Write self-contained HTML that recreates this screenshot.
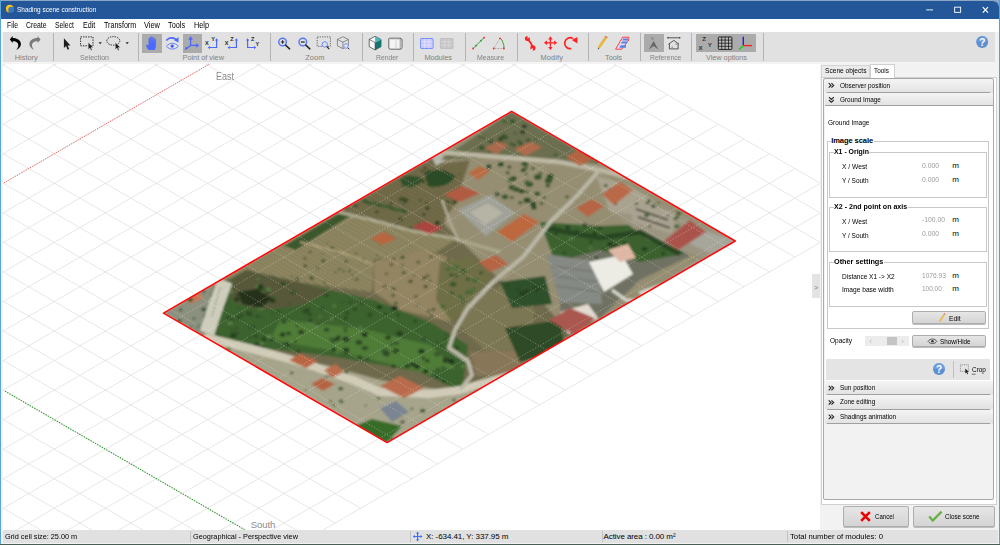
<!DOCTYPE html><html><head><meta charset="utf-8"><style>
*{margin:0;padding:0;box-sizing:border-box}
html,body{width:1000px;height:545px;overflow:hidden;background:#6aa8d8}
body{position:relative;font-family:"Liberation Sans",sans-serif}
.t{position:absolute;white-space:pre;line-height:normal}
.b{position:absolute}
svg{position:absolute;left:0;top:0;overflow:visible}
</style></head><body><div class="b" style="left:0px;top:0px;width:1000px;height:2px;background:#8aa6c4;"></div><div class="b" style="left:0px;top:0px;width:1.2px;height:545px;background:#5aa6d8;"></div><div class="b" style="left:0px;top:543.5px;width:1000px;height:2px;background:#4a5e56;"></div><div class="b" style="left:999px;top:0px;width:1px;height:543px;background:#5a9fd0;"></div><div class="b" style="left:1px;top:1px;width:998px;height:543px;background:#f2f2f2;border-top-right-radius:6px;"></div><div class="b" style="left:1px;top:1px;width:998px;height:18px;background:#24569a;border-top-right-radius:6px;"></div><div class="t" style="left:16.8px;top:5.21px;font-size:8.0px;color:#ffffff;letter-spacing:0.000px;transform:scaleX(0.806);transform-origin:0 0;">Shading scene construction</div><svg width="1000" height="20" style="left:0;top:0"><circle cx="9.7" cy="8.5" r="3.7" fill="#ffc814"/><path d="M6.4,10 A3.7,3.7 0 0 0 8.6,12" stroke="#f39a12" stroke-width="1.6" fill="none"/><circle cx="11.2" cy="9.7" r="2.9" fill="#3478c8"/><path d="M926.2 9.9H933" stroke="#e8eef8" stroke-width="1"/><rect x="954.6" y="7.2" width="6" height="5.2" fill="none" stroke="#e8eef8" stroke-width="1"/><path d="M982.8 7.2L988 12.6M988 7.2L982.8 12.6" stroke="#ffffff" stroke-width="1.2"/></svg><div class="b" style="left:1px;top:19px;width:998px;height:13px;background:#ffffff;"></div><div class="t" style="left:6.6px;top:20.78px;font-size:8.2px;color:#000;letter-spacing:0.000px;transform:scaleX(0.833);transform-origin:0 0;">File</div><div class="t" style="left:26.0px;top:20.78px;font-size:8.2px;color:#000;letter-spacing:0.000px;transform:scaleX(0.837);transform-origin:0 0;">Create</div><div class="t" style="left:55.0px;top:20.78px;font-size:8.2px;color:#000;letter-spacing:0.000px;transform:scaleX(0.834);transform-origin:0 0;">Select</div><div class="t" style="left:82.7px;top:20.78px;font-size:8.2px;color:#000;letter-spacing:0.000px;transform:scaleX(0.870);transform-origin:0 0;">Edit</div><div class="t" style="left:103.8px;top:20.78px;font-size:8.2px;color:#000;letter-spacing:0.000px;transform:scaleX(0.869);transform-origin:0 0;">Transform</div><div class="t" style="left:144.0px;top:20.78px;font-size:8.2px;color:#000;letter-spacing:0.000px;transform:scaleX(0.908);transform-origin:0 0;">View</div><div class="t" style="left:168.3px;top:20.78px;font-size:8.2px;color:#000;letter-spacing:0.000px;transform:scaleX(0.899);transform-origin:0 0;">Tools</div><div class="t" style="left:193.6px;top:20.78px;font-size:8.2px;color:#000;letter-spacing:0.000px;transform:scaleX(0.889);transform-origin:0 0;">Help</div><div class="b" style="left:3px;top:32px;width:992px;height:30px;background:#e1e1e1;"></div><div class="b" style="left:1px;top:62px;width:998px;height:2px;background:#f4f4f4;"></div><div class="b" style="left:53.1px;top:33px;width:1px;height:28px;background:#b4b4b4;"></div><div class="b" style="left:138.3px;top:33px;width:1px;height:28px;background:#b4b4b4;"></div><div class="b" style="left:270.2px;top:33px;width:1px;height:28px;background:#b4b4b4;"></div><div class="b" style="left:361.8px;top:33px;width:1px;height:28px;background:#b4b4b4;"></div><div class="b" style="left:412.9px;top:33px;width:1px;height:28px;background:#b4b4b4;"></div><div class="b" style="left:464.9px;top:33px;width:1px;height:28px;background:#b4b4b4;"></div><div class="b" style="left:517.0px;top:33px;width:1px;height:28px;background:#b4b4b4;"></div><div class="b" style="left:587.9px;top:33px;width:1px;height:28px;background:#b4b4b4;"></div><div class="b" style="left:639.9px;top:33px;width:1px;height:28px;background:#b4b4b4;"></div><div class="b" style="left:691.1px;top:33px;width:1px;height:28px;background:#b4b4b4;"></div><div class="b" style="left:762.5px;top:33px;width:1px;height:28px;background:#b4b4b4;"></div><div class="t" style="left:14.7px;top:53.09px;font-size:7.41px;color:#828282;letter-spacing:0.006px;">History</div><div class="t" style="left:80.0px;top:53.09px;font-size:7.41px;color:#828282;letter-spacing:0.000px;transform:scaleX(0.951);transform-origin:0 0;">Selection</div><div class="t" style="left:182.5px;top:53.09px;font-size:7.41px;color:#828282;letter-spacing:-0.039px;">Point of view</div><div class="t" style="left:305.2px;top:53.09px;font-size:7.41px;color:#828282;letter-spacing:0.065px;">Zoom</div><div class="t" style="left:375.6px;top:53.09px;font-size:7.41px;color:#828282;letter-spacing:0.000px;transform:scaleX(0.922);transform-origin:0 0;">Render</div><div class="t" style="left:424.4px;top:53.09px;font-size:7.41px;color:#828282;letter-spacing:-0.087px;">Modules</div><div class="t" style="left:476.6px;top:53.09px;font-size:7.41px;color:#828282;letter-spacing:0.000px;transform:scaleX(0.937);transform-origin:0 0;">Measure</div><div class="t" style="left:540.5px;top:53.09px;font-size:7.41px;color:#828282;letter-spacing:0.113px;">Modify</div><div class="t" style="left:605.0px;top:53.09px;font-size:7.41px;color:#828282;letter-spacing:-0.060px;">Tools</div><div class="t" style="left:649.6px;top:53.09px;font-size:7.41px;color:#828282;letter-spacing:0.000px;transform:scaleX(0.918);transform-origin:0 0;">Reference</div><div class="t" style="left:706.0px;top:53.09px;font-size:7.41px;color:#828282;letter-spacing:-0.073px;">View options</div><div class="b" style="left:142.3px;top:33.5px;width:19.6px;height:19px;background:#ababab;"></div><div class="b" style="left:182.5px;top:33.5px;width:19.3px;height:19px;background:#ababab;"></div><div class="b" style="left:644px;top:33.6px;width:20px;height:18.8px;background:#ababab;"></div><div class="b" style="left:696px;top:33.6px;width:60px;height:18.8px;background:#ababab;"></div><div class="b" style="left:3px;top:64px;width:817px;height:466px;background:#ffffff;"></div><svg width="1000" height="545" style="left:0;top:0">
<defs><clipPath id="vp"><rect x="3" y="64" width="817" height="466"/></clipPath>
<clipPath id="mp"><polygon points="163.5,313.1 511.6,111.4 735.2,241.0 387.1,442.6"/></clipPath></defs>
<g clip-path="url(#vp)">
<path d="M0.00 -169.30L105.38 -230.24M0.00 -139.76L130.92 -215.47M0.00 -110.22L156.46 -200.70M0.00 -80.68L182.00 -185.93M0.00 -51.14L207.54 -171.16M0.00 -21.60L233.08 -156.39M0.00 7.94L258.62 -141.62M0.00 37.48L284.16 -126.85M0.00 67.02L309.70 -112.08M0.00 96.56L335.24 -97.31M0.00 126.10L360.78 -82.54M0.00 155.64L386.32 -67.77M0.00 185.18L411.86 -53.00M0.00 214.72L437.40 -38.23M0.00 244.26L462.94 -23.46M0.00 273.80L488.48 -8.69M0.00 303.34L514.02 6.08M0.00 332.88L539.56 20.85M0.00 362.42L565.10 35.62M0.00 391.96L590.64 50.39M0.00 421.50L616.18 65.16M0.00 451.04L641.72 79.93M0.00 480.58L667.26 94.70M0.00 510.12L692.80 109.47M0.00 539.66L718.34 124.24M0.00 569.20L743.88 139.01M0.00 598.74L769.42 153.78M0.00 628.28L794.96 168.55M0.00 657.82L820.00 183.61M0.00 687.36L820.00 213.15M0.00 716.90L820.00 242.69M0.00 -291.18L820.00 183.03M0.00 -261.64L820.00 212.57M0.00 -232.10L820.00 242.11M0.00 -202.56L794.96 257.17M0.00 -173.02L769.42 271.94M0.00 -143.48L743.88 286.71M0.00 -113.94L718.34 301.48M0.00 -84.40L692.80 316.25M0.00 -54.86L667.26 331.02M0.00 -25.32L641.72 345.79M0.00 4.22L616.18 360.56M0.00 33.76L590.64 375.33M0.00 63.30L565.10 390.10M0.00 92.84L539.56 404.87M0.00 122.38L514.02 419.64M0.00 151.92L488.48 434.41M0.00 181.46L462.94 449.18M0.00 211.00L437.40 463.95M0.00 240.54L411.86 478.72M0.00 270.08L386.32 493.49M0.00 299.62L360.78 508.26M0.00 329.16L335.24 523.03M0.00 358.70L309.70 537.80M0.00 388.24L284.16 552.57M0.00 417.78L258.62 567.34M0.00 447.32L233.08 582.11M0.00 476.86L207.54 596.88M0.00 506.40L182.00 611.65M0.00 535.94L156.46 626.42M0.00 565.48L130.92 641.19M0.00 595.02L105.38 655.96M0.00 624.56L79.84 670.73M0.00 654.10L54.30 685.50M0.00 683.64L28.76 700.27M0.00 713.18L3.22 715.04" stroke="#dcdcdc" stroke-width="0.7" fill="none"/>
<line x1="4" y1="182.87" x2="210.8" y2="63.27" stroke="#f06060" stroke-width="1" stroke-dasharray="1.2 1.3"/>
<line x1="5" y1="391.13" x2="244.5" y2="529.63" stroke="#2a9a2a" stroke-width="1.1" stroke-dasharray="1.3 1.3"/>
<g clip-path="url(#mp)"><defs><filter id="mblur" filterUnits="userSpaceOnUse" x="150" y="100" width="600" height="350"><feGaussianBlur stdDeviation="1"/><feColorMatrix type="saturate" values="1.12"/></filter></defs><g filter="url(#mblur)"><polygon points="163.5,313.1 511.6,111.4 735.2,241.0 387.1,442.6" fill="#6e6a50" /><polygon points="440.0,152.0 511.6,111.4 735.2,241.0 660.0,285.0 600.0,320.0 560.0,322.0 540.0,300.0 500.0,280.0 470.0,250.0 445.0,225.0" fill="#948e76" /><pattern id="vc1" width="3.6" height="3.6" patternUnits="userSpaceOnUse" patternTransform="rotate(30)"><rect width="3.6" height="3.6" fill="#9a9270"/><rect width="3.6" height="1.3" fill="#6a664a"/></pattern><polygon points="190.0,298.0 340.0,211.0 420.0,232.0 455.0,240.0 430.0,256.0 374.0,259.0 372.0,292.0 300.0,282.0 246.0,270.0" fill="url(#vc1)" /><pattern id="vc2" width="3.6" height="3.6" patternUnits="userSpaceOnUse" patternTransform="rotate(30)"><rect width="3.6" height="3.6" fill="#7c7656"/><rect width="3.6" height="1.3" fill="#545036"/></pattern><polygon points="345.0,208.0 420.0,166.0 470.0,160.0 455.0,205.0 440.0,225.0 410.0,230.0 380.0,222.0" fill="url(#vc2)" /><ellipse cx="401.5" cy="199.2" rx="2.9" ry="2.1" fill="#404e30" opacity="1.0"/><ellipse cx="401.5" cy="219.9" rx="1.5" ry="1.1" fill="#2c3a24" opacity="1.0"/><ellipse cx="404.5" cy="203.0" rx="1.5" ry="1.1" fill="#404e30" opacity="1.0"/><ellipse cx="446.2" cy="208.5" rx="1.2" ry="0.9" fill="#404e30" opacity="1.0"/><ellipse cx="421.9" cy="171.0" rx="1.2" ry="0.9" fill="#2c3a24" opacity="1.0"/><ellipse cx="454.9" cy="202.0" rx="2.6" ry="1.9" fill="#404e30" opacity="1.0"/><ellipse cx="400.1" cy="219.0" rx="2.1" ry="1.6" fill="#2c3a24" opacity="1.0"/><ellipse cx="355.6" cy="205.8" rx="1.9" ry="1.4" fill="#2c3a24" opacity="1.0"/><ellipse cx="433.5" cy="182.1" rx="1.6" ry="1.2" fill="#404e30" opacity="1.0"/><ellipse cx="347.1" cy="207.9" rx="1.5" ry="1.1" fill="#34462a" opacity="1.0"/><ellipse cx="423.7" cy="214.5" rx="1.6" ry="1.2" fill="#34462a" opacity="1.0"/><ellipse cx="396.3" cy="224.6" rx="1.4" ry="1.0" fill="#2c3a24" opacity="1.0"/><ellipse cx="444.6" cy="172.4" rx="2.2" ry="1.6" fill="#404e30" opacity="1.0"/><ellipse cx="408.6" cy="229.0" rx="2.6" ry="1.9" fill="#404e30" opacity="1.0"/><ellipse cx="425.5" cy="168.2" rx="1.9" ry="1.4" fill="#34462a" opacity="1.0"/><ellipse cx="420.3" cy="200.4" rx="1.2" ry="0.9" fill="#34462a" opacity="1.0"/><ellipse cx="441.6" cy="183.0" rx="1.7" ry="1.3" fill="#34462a" opacity="1.0"/><ellipse cx="391.1" cy="203.6" rx="1.4" ry="1.0" fill="#2c3a24" opacity="1.0"/><ellipse cx="405.5" cy="200.2" rx="2.7" ry="2.0" fill="#34462a" opacity="1.0"/><ellipse cx="423.4" cy="181.8" rx="1.6" ry="1.2" fill="#2c3a24" opacity="1.0"/><ellipse cx="455.3" cy="202.2" rx="1.9" ry="1.4" fill="#34462a" opacity="1.0"/><ellipse cx="376.9" cy="211.8" rx="1.9" ry="1.4" fill="#404e30" opacity="1.0"/><ellipse cx="448.0" cy="201.8" rx="1.7" ry="1.2" fill="#34462a" opacity="1.0"/><ellipse cx="426.7" cy="203.1" rx="1.3" ry="1.0" fill="#34462a" opacity="1.0"/><ellipse cx="459.7" cy="174.3" rx="1.2" ry="0.9" fill="#404e30" opacity="1.0"/><ellipse cx="411.4" cy="228.1" rx="1.3" ry="1.0" fill="#34462a" opacity="1.0"/><ellipse cx="427.1" cy="208.4" rx="2.2" ry="1.6" fill="#34462a" opacity="1.0"/><ellipse cx="418.7" cy="224.7" rx="2.0" ry="1.5" fill="#404e30" opacity="1.0"/><ellipse cx="405.3" cy="211.1" rx="1.7" ry="1.3" fill="#34462a" opacity="1.0"/><ellipse cx="437.1" cy="223.0" rx="2.5" ry="1.9" fill="#2c3a24" opacity="1.0"/><path d="M424,172 Q440,166 456,176 Q446,190 428,186 Z" fill="#2e4a2a"/><path d="M400,178 Q412,172 424,180 Q414,190 402,186 Z" fill="#35502e"/><path d="M362,201 L384,206 L406,212" stroke="#3a5a34" stroke-width="3" fill="none"/><polygon points="431.0,155.0 440.0,152.0 446.0,160.0 436.0,166.0" fill="#b8bab0" /><polygon points="284.0,246.0 340.0,213.0 350.0,216.0 296.0,250.0" fill="#3c5632" /><ellipse cx="500.7" cy="164.2" rx="3.1" ry="2.3" fill="#2e4a2a" opacity="1.0"/><ellipse cx="548.4" cy="180.9" rx="3.7" ry="2.7" fill="#3a5430" opacity="1.0"/><ellipse cx="521.6" cy="191.2" rx="3.0" ry="2.2" fill="#2e4a2a" opacity="1.0"/><ellipse cx="524.8" cy="164.0" rx="3.4" ry="2.5" fill="#3a5430" opacity="1.0"/><ellipse cx="505.0" cy="196.8" rx="3.3" ry="2.4" fill="#3a5430" opacity="1.0"/><ellipse cx="511.6" cy="187.1" rx="3.2" ry="2.4" fill="#2e4a2a" opacity="1.0"/><ellipse cx="529.4" cy="184.3" rx="3.8" ry="2.8" fill="#3a5430" opacity="1.0"/><ellipse cx="497.1" cy="193.9" rx="2.6" ry="2.0" fill="#2e4a2a" opacity="1.0"/><ellipse cx="537.8" cy="177.1" rx="3.9" ry="2.9" fill="#3a5430" opacity="1.0"/><ellipse cx="550.3" cy="176.3" rx="3.4" ry="2.5" fill="#2e4a2a" opacity="1.0"/><ellipse cx="527.1" cy="200.2" rx="3.6" ry="2.7" fill="#2e4a2a" opacity="1.0"/><ellipse cx="549.2" cy="179.2" rx="3.3" ry="2.4" fill="#3a5430" opacity="1.0"/><ellipse cx="488.9" cy="166.7" rx="2.9" ry="2.1" fill="#2e4a2a" opacity="1.0"/><ellipse cx="534.0" cy="207.5" rx="2.8" ry="2.1" fill="#2e4a2a" opacity="1.0"/><polygon points="440.0,160.0 511.6,111.4 600.0,163.0 560.0,162.0 500.0,156.0" fill="#6c6e52" /><ellipse cx="501.2" cy="138.2" rx="2.4" ry="1.8" fill="#2a3a24" opacity="1.0"/><ellipse cx="574.3" cy="162.1" rx="2.0" ry="1.5" fill="#34502e" opacity="1.0"/><ellipse cx="537.2" cy="146.4" rx="1.7" ry="1.2" fill="#44603a" opacity="1.0"/><ellipse cx="489.4" cy="152.2" rx="1.2" ry="0.9" fill="#34502e" opacity="1.0"/><ellipse cx="504.8" cy="121.2" rx="2.6" ry="1.9" fill="#44603a" opacity="1.0"/><ellipse cx="511.4" cy="143.9" rx="2.4" ry="1.7" fill="#44603a" opacity="1.0"/><ellipse cx="515.6" cy="148.3" rx="1.5" ry="1.1" fill="#44603a" opacity="1.0"/><ellipse cx="512.1" cy="121.6" rx="2.8" ry="2.1" fill="#34502e" opacity="1.0"/><ellipse cx="500.3" cy="140.8" rx="2.8" ry="2.0" fill="#44603a" opacity="1.0"/><ellipse cx="514.2" cy="145.0" rx="1.5" ry="1.1" fill="#2a3a24" opacity="1.0"/><ellipse cx="578.6" cy="152.6" rx="2.9" ry="2.1" fill="#34502e" opacity="1.0"/><ellipse cx="596.9" cy="161.8" rx="2.1" ry="1.6" fill="#44603a" opacity="1.0"/><ellipse cx="481.9" cy="148.5" rx="1.2" ry="0.9" fill="#2a3a24" opacity="1.0"/><ellipse cx="528.0" cy="151.0" rx="2.0" ry="1.5" fill="#34502e" opacity="1.0"/><ellipse cx="474.9" cy="156.2" rx="1.9" ry="1.4" fill="#34502e" opacity="1.0"/><ellipse cx="555.8" cy="154.7" rx="2.4" ry="1.8" fill="#44603a" opacity="1.0"/><ellipse cx="532.6" cy="147.0" rx="2.5" ry="1.9" fill="#44603a" opacity="1.0"/><ellipse cx="524.3" cy="126.4" rx="2.5" ry="1.8" fill="#2a3a24" opacity="1.0"/><ellipse cx="547.4" cy="160.7" rx="2.8" ry="2.0" fill="#2a3a24" opacity="1.0"/><ellipse cx="473.3" cy="155.3" rx="2.9" ry="2.2" fill="#2a3a24" opacity="1.0"/><ellipse cx="483.7" cy="137.1" rx="1.9" ry="1.4" fill="#34502e" opacity="1.0"/><ellipse cx="520.5" cy="142.6" rx="1.2" ry="0.9" fill="#34502e" opacity="1.0"/><ellipse cx="522.6" cy="132.1" rx="2.6" ry="1.9" fill="#2a3a24" opacity="1.0"/><ellipse cx="479.4" cy="136.8" rx="1.8" ry="1.3" fill="#44603a" opacity="1.0"/><ellipse cx="481.6" cy="147.6" rx="2.9" ry="2.2" fill="#34502e" opacity="1.0"/><ellipse cx="496.9" cy="143.4" rx="1.3" ry="1.0" fill="#2a3a24" opacity="1.0"/><path d="M300,242 L340,252 L378,266" stroke="#a89c7c" stroke-width="2.2" fill="none"/><polygon points="374.0,262.0 425.0,250.0 462.0,262.0 468.0,300.0 452.0,322.0 400.0,310.0 374.0,292.0" fill="#928466" /><ellipse cx="428.7" cy="311.3" rx="1.8" ry="1.3" fill="#3e4a30" opacity="1.0"/><ellipse cx="392.6" cy="288.2" rx="1.5" ry="1.1" fill="#56603e" opacity="1.0"/><ellipse cx="433.5" cy="309.4" rx="1.7" ry="1.3" fill="#3e4a30" opacity="1.0"/><ellipse cx="393.2" cy="295.5" rx="1.8" ry="1.3" fill="#3e4a30" opacity="1.0"/><ellipse cx="394.3" cy="289.1" rx="1.7" ry="1.3" fill="#4a5636" opacity="1.0"/><ellipse cx="395.9" cy="303.3" rx="2.0" ry="1.5" fill="#4a5636" opacity="1.0"/><ellipse cx="403.7" cy="272.7" rx="2.1" ry="1.5" fill="#4a5636" opacity="1.0"/><ellipse cx="447.2" cy="264.0" rx="1.1" ry="0.8" fill="#4a5636" opacity="1.0"/><ellipse cx="410.5" cy="281.3" rx="2.1" ry="1.6" fill="#3e4a30" opacity="1.0"/><ellipse cx="448.3" cy="259.1" rx="1.5" ry="1.1" fill="#3e4a30" opacity="1.0"/><ellipse cx="427.6" cy="275.7" rx="2.0" ry="1.5" fill="#56603e" opacity="1.0"/><ellipse cx="384.8" cy="286.4" rx="1.9" ry="1.4" fill="#3e4a30" opacity="1.0"/><ellipse cx="449.5" cy="284.7" rx="1.1" ry="0.8" fill="#3e4a30" opacity="1.0"/><ellipse cx="431.7" cy="315.2" rx="1.6" ry="1.2" fill="#4a5636" opacity="1.0"/><ellipse cx="391.3" cy="264.7" rx="2.0" ry="1.5" fill="#56603e" opacity="1.0"/><ellipse cx="417.4" cy="305.1" rx="1.4" ry="1.0" fill="#56603e" opacity="1.0"/><ellipse cx="414.1" cy="275.5" rx="1.3" ry="0.9" fill="#56603e" opacity="1.0"/><ellipse cx="453.4" cy="263.1" rx="1.6" ry="1.2" fill="#3e4a30" opacity="1.0"/><ellipse cx="430.9" cy="256.8" rx="1.9" ry="1.4" fill="#56603e" opacity="1.0"/><ellipse cx="458.0" cy="307.7" rx="1.8" ry="1.4" fill="#3e4a30" opacity="1.0"/><ellipse cx="462.3" cy="291.0" rx="1.3" ry="0.9" fill="#3e4a30" opacity="1.0"/><ellipse cx="444.0" cy="306.0" rx="2.0" ry="1.5" fill="#56603e" opacity="1.0"/><ellipse cx="386.5" cy="273.8" rx="1.7" ry="1.2" fill="#56603e" opacity="1.0"/><ellipse cx="446.1" cy="305.1" rx="1.5" ry="1.1" fill="#3e4a30" opacity="1.0"/><ellipse cx="402.4" cy="257.3" rx="2.1" ry="1.5" fill="#3e4a30" opacity="1.0"/><ellipse cx="402.1" cy="265.6" rx="1.5" ry="1.1" fill="#4a5636" opacity="1.0"/><ellipse cx="424.1" cy="278.1" rx="2.2" ry="1.6" fill="#3e4a30" opacity="1.0"/><ellipse cx="394.0" cy="258.6" rx="1.5" ry="1.1" fill="#3e4a30" opacity="1.0"/><ellipse cx="443.4" cy="268.5" rx="1.5" ry="1.1" fill="#4a5636" opacity="1.0"/><ellipse cx="445.6" cy="296.7" rx="1.0" ry="0.8" fill="#56603e" opacity="1.0"/><ellipse cx="425.7" cy="286.6" rx="2.1" ry="1.6" fill="#3e4a30" opacity="1.0"/><ellipse cx="415.8" cy="296.4" rx="1.7" ry="1.2" fill="#3e4a30" opacity="1.0"/><ellipse cx="418.3" cy="262.2" rx="1.6" ry="1.2" fill="#3e4a30" opacity="1.0"/><ellipse cx="430.1" cy="280.9" rx="1.6" ry="1.2" fill="#56603e" opacity="1.0"/><ellipse cx="339.5" cy="268.9" rx="1.3" ry="1.0" fill="#4a5636" opacity="1.0"/><ellipse cx="332.2" cy="247.5" rx="2.0" ry="1.5" fill="#4a5636" opacity="1.0"/><ellipse cx="349.6" cy="271.1" rx="1.4" ry="1.0" fill="#4a5636" opacity="1.0"/><ellipse cx="317.6" cy="267.8" rx="1.8" ry="1.3" fill="#4a5636" opacity="1.0"/><ellipse cx="323.0" cy="261.0" rx="2.0" ry="1.5" fill="#3e4c30" opacity="1.0"/><ellipse cx="291.7" cy="275.9" rx="1.0" ry="0.7" fill="#4a5636" opacity="1.0"/><ellipse cx="327.5" cy="243.2" rx="1.0" ry="0.7" fill="#3e4c30" opacity="1.0"/><ellipse cx="363.5" cy="259.6" rx="1.2" ry="0.9" fill="#4a5636" opacity="1.0"/><ellipse cx="311.9" cy="278.4" rx="1.9" ry="1.4" fill="#3e4c30" opacity="1.0"/><ellipse cx="356.2" cy="253.3" rx="1.2" ry="0.9" fill="#3e4c30" opacity="1.0"/><ellipse cx="357.6" cy="279.0" rx="1.1" ry="0.8" fill="#3e4c30" opacity="1.0"/><ellipse cx="335.4" cy="272.4" rx="1.1" ry="0.8" fill="#3e4c30" opacity="1.0"/><ellipse cx="297.3" cy="279.1" rx="2.0" ry="1.5" fill="#3e4c30" opacity="1.0"/><ellipse cx="343.6" cy="271.0" rx="1.3" ry="1.0" fill="#4a5636" opacity="1.0"/><ellipse cx="310.2" cy="252.0" rx="1.5" ry="1.1" fill="#3e4c30" opacity="1.0"/><ellipse cx="356.0" cy="280.0" rx="1.2" ry="0.9" fill="#4a5636" opacity="1.0"/><ellipse cx="377.0" cy="255.4" rx="1.1" ry="0.8" fill="#3e4c30" opacity="1.0"/><ellipse cx="305.3" cy="265.7" rx="1.8" ry="1.3" fill="#3e4c30" opacity="1.0"/><ellipse cx="322.7" cy="254.0" rx="1.0" ry="0.8" fill="#4a5636" opacity="1.0"/><ellipse cx="345.9" cy="261.5" rx="1.7" ry="1.3" fill="#4a5636" opacity="1.0"/><ellipse cx="352.6" cy="275.2" rx="1.5" ry="1.1" fill="#4a5636" opacity="1.0"/><ellipse cx="310.8" cy="277.2" rx="1.3" ry="1.0" fill="#3e4c30" opacity="1.0"/><ellipse cx="304.8" cy="258.7" rx="1.6" ry="1.2" fill="#4a5636" opacity="1.0"/><ellipse cx="324.5" cy="282.2" rx="1.3" ry="0.9" fill="#4a5636" opacity="1.0"/><ellipse cx="374.1" cy="263.6" rx="1.0" ry="0.8" fill="#4a5636" opacity="1.0"/><polygon points="200.0,300.0 246.0,270.0 300.0,283.0 374.0,300.0 430.0,322.0 468.0,345.0 462.0,392.0 420.0,372.0 330.0,356.0 262.0,348.0 214.0,338.0" fill="#406234" /><polygon points="280.0,320.0 360.0,328.0 430.0,345.0 455.0,368.0 420.0,372.0 340.0,352.0 270.0,340.0" fill="#537a40" /><polygon points="228.0,284.0 246.0,270.0 300.0,283.0 330.0,292.0 300.0,306.0 260.0,310.0 232.0,302.0" fill="#56583e" /><ellipse cx="398.0" cy="314.9" rx="2.2" ry="1.6" fill="#324a2a" opacity="1.0"/><ellipse cx="424.1" cy="338.7" rx="1.7" ry="1.3" fill="#223620" opacity="1.0"/><ellipse cx="345.8" cy="339.2" rx="3.4" ry="2.5" fill="#223620" opacity="1.0"/><ellipse cx="217.2" cy="336.7" rx="3.0" ry="2.2" fill="#2a4024" opacity="1.0"/><ellipse cx="289.7" cy="303.4" rx="1.6" ry="1.2" fill="#3b5830" opacity="1.0"/><ellipse cx="305.7" cy="311.2" rx="3.4" ry="2.5" fill="#324a2a" opacity="1.0"/><ellipse cx="332.3" cy="335.6" rx="2.9" ry="2.1" fill="#5a7a48" opacity="1.0"/><ellipse cx="421.4" cy="351.3" rx="3.1" ry="2.3" fill="#223620" opacity="1.0"/><ellipse cx="456.7" cy="348.1" rx="2.5" ry="1.8" fill="#2a4024" opacity="1.0"/><ellipse cx="415.0" cy="321.4" rx="2.3" ry="1.7" fill="#324a2a" opacity="1.0"/><ellipse cx="265.9" cy="289.8" rx="2.7" ry="2.0" fill="#324a2a" opacity="1.0"/><ellipse cx="286.0" cy="317.5" rx="2.5" ry="1.8" fill="#3b5830" opacity="1.0"/><ellipse cx="282.7" cy="284.0" rx="2.7" ry="2.0" fill="#324a2a" opacity="1.0"/><ellipse cx="444.5" cy="361.9" rx="1.4" ry="1.0" fill="#223620" opacity="1.0"/><ellipse cx="229.1" cy="292.5" rx="1.8" ry="1.4" fill="#324a2a" opacity="1.0"/><ellipse cx="360.8" cy="327.6" rx="2.4" ry="1.8" fill="#223620" opacity="1.0"/><ellipse cx="249.6" cy="304.3" rx="1.7" ry="1.3" fill="#3b5830" opacity="1.0"/><ellipse cx="329.9" cy="319.1" rx="3.4" ry="2.5" fill="#5a7a48" opacity="1.0"/><ellipse cx="258.3" cy="286.4" rx="3.0" ry="2.2" fill="#5a7a48" opacity="1.0"/><ellipse cx="413.0" cy="364.4" rx="3.0" ry="2.2" fill="#2a4024" opacity="1.0"/><ellipse cx="391.2" cy="343.9" rx="1.7" ry="1.3" fill="#324a2a" opacity="1.0"/><ellipse cx="443.4" cy="368.8" rx="1.7" ry="1.2" fill="#5a7a48" opacity="1.0"/><ellipse cx="271.4" cy="335.2" rx="1.7" ry="1.3" fill="#324a2a" opacity="1.0"/><ellipse cx="426.8" cy="370.3" rx="1.6" ry="1.1" fill="#3b5830" opacity="1.0"/><ellipse cx="364.8" cy="334.4" rx="3.2" ry="2.4" fill="#223620" opacity="1.0"/><ellipse cx="345.6" cy="331.7" rx="1.4" ry="1.0" fill="#324a2a" opacity="1.0"/><ellipse cx="255.9" cy="336.3" rx="2.5" ry="1.8" fill="#324a2a" opacity="1.0"/><ellipse cx="453.7" cy="387.6" rx="2.0" ry="1.5" fill="#223620" opacity="1.0"/><ellipse cx="220.4" cy="307.3" rx="2.3" ry="1.7" fill="#2a4024" opacity="1.0"/><ellipse cx="228.3" cy="318.1" rx="2.3" ry="1.7" fill="#2a4024" opacity="1.0"/><ellipse cx="263.6" cy="338.8" rx="2.3" ry="1.7" fill="#2a4024" opacity="1.0"/><ellipse cx="429.4" cy="373.0" rx="2.9" ry="2.1" fill="#5a7a48" opacity="1.0"/><ellipse cx="451.2" cy="361.5" rx="3.4" ry="2.5" fill="#223620" opacity="1.0"/><ellipse cx="250.6" cy="315.9" rx="1.6" ry="1.2" fill="#3b5830" opacity="1.0"/><ellipse cx="453.3" cy="338.7" rx="2.9" ry="2.1" fill="#3b5830" opacity="1.0"/><ellipse cx="319.8" cy="316.7" rx="1.6" ry="1.2" fill="#5a7a48" opacity="1.0"/><ellipse cx="260.7" cy="289.2" rx="1.6" ry="1.2" fill="#223620" opacity="1.0"/><ellipse cx="237.3" cy="295.1" rx="1.7" ry="1.2" fill="#223620" opacity="1.0"/><ellipse cx="367.0" cy="358.7" rx="2.6" ry="2.0" fill="#3b5830" opacity="1.0"/><ellipse cx="463.2" cy="366.3" rx="2.7" ry="2.0" fill="#5a7a48" opacity="1.0"/><ellipse cx="342.0" cy="301.8" rx="1.8" ry="1.3" fill="#3b5830" opacity="1.0"/><ellipse cx="301.2" cy="332.1" rx="3.0" ry="2.2" fill="#2a4024" opacity="1.0"/><ellipse cx="346.9" cy="313.0" rx="2.4" ry="1.8" fill="#324a2a" opacity="1.0"/><ellipse cx="236.5" cy="328.3" rx="2.2" ry="1.7" fill="#3b5830" opacity="1.0"/><ellipse cx="296.8" cy="326.5" rx="1.6" ry="1.2" fill="#324a2a" opacity="1.0"/><ellipse cx="264.0" cy="339.5" rx="2.5" ry="1.9" fill="#2a4024" opacity="1.0"/><ellipse cx="350.2" cy="302.3" rx="3.3" ry="2.4" fill="#3b5830" opacity="1.0"/><ellipse cx="249.7" cy="336.8" rx="1.5" ry="1.1" fill="#2a4024" opacity="1.0"/><ellipse cx="364.9" cy="348.1" rx="3.0" ry="2.2" fill="#324a2a" opacity="1.0"/><ellipse cx="253.5" cy="327.1" rx="1.7" ry="1.2" fill="#223620" opacity="1.0"/><ellipse cx="231.7" cy="319.5" rx="2.1" ry="1.5" fill="#324a2a" opacity="1.0"/><ellipse cx="270.7" cy="339.3" rx="2.1" ry="1.5" fill="#2a4024" opacity="1.0"/><ellipse cx="393.4" cy="366.1" rx="2.2" ry="1.6" fill="#223620" opacity="1.0"/><ellipse cx="360.8" cy="327.3" rx="2.2" ry="1.6" fill="#5a7a48" opacity="1.0"/><ellipse cx="444.7" cy="338.9" rx="2.2" ry="1.6" fill="#3b5830" opacity="1.0"/><ellipse cx="309.6" cy="322.9" rx="2.6" ry="1.9" fill="#5a7a48" opacity="1.0"/><ellipse cx="288.5" cy="333.5" rx="2.3" ry="1.7" fill="#2a4024" opacity="1.0"/><ellipse cx="396.2" cy="342.9" rx="2.9" ry="2.2" fill="#3b5830" opacity="1.0"/><ellipse cx="436.5" cy="377.0" rx="1.9" ry="1.4" fill="#223620" opacity="1.0"/><ellipse cx="346.1" cy="350.1" rx="3.3" ry="2.5" fill="#2a4024" opacity="1.0"/><ellipse cx="346.4" cy="338.8" rx="1.7" ry="1.3" fill="#223620" opacity="1.0"/><ellipse cx="233.2" cy="335.6" rx="3.3" ry="2.5" fill="#2a4024" opacity="1.0"/><ellipse cx="318.1" cy="324.9" rx="2.5" ry="1.8" fill="#324a2a" opacity="1.0"/><ellipse cx="295.5" cy="341.4" rx="1.5" ry="1.1" fill="#2a4024" opacity="1.0"/><ellipse cx="321.9" cy="308.3" rx="2.1" ry="1.5" fill="#324a2a" opacity="1.0"/><ellipse cx="326.7" cy="295.2" rx="2.0" ry="1.5" fill="#2a4024" opacity="1.0"/><ellipse cx="294.9" cy="327.6" rx="1.7" ry="1.3" fill="#5a7a48" opacity="1.0"/><ellipse cx="394.5" cy="308.2" rx="3.2" ry="2.4" fill="#223620" opacity="1.0"/><ellipse cx="259.8" cy="307.5" rx="2.9" ry="2.1" fill="#324a2a" opacity="1.0"/><ellipse cx="334.4" cy="306.0" rx="1.9" ry="1.4" fill="#5a7a48" opacity="1.0"/><ellipse cx="437.0" cy="342.0" rx="1.9" ry="1.4" fill="#3b5830" opacity="1.0"/><ellipse cx="260.6" cy="286.2" rx="2.8" ry="2.0" fill="#223620" opacity="1.0"/><ellipse cx="341.6" cy="334.8" rx="1.5" ry="1.1" fill="#5a7a48" opacity="1.0"/><ellipse cx="357.2" cy="335.5" rx="2.3" ry="1.7" fill="#5a7a48" opacity="1.0"/><ellipse cx="223.4" cy="304.8" rx="2.9" ry="2.2" fill="#324a2a" opacity="1.0"/><ellipse cx="399.5" cy="334.9" rx="2.6" ry="1.9" fill="#324a2a" opacity="1.0"/><ellipse cx="230.0" cy="323.1" rx="2.8" ry="2.0" fill="#5a7a48" opacity="1.0"/><ellipse cx="407.2" cy="366.0" rx="3.0" ry="2.2" fill="#324a2a" opacity="1.0"/><ellipse cx="269.6" cy="336.4" rx="3.1" ry="2.3" fill="#5a7a48" opacity="1.0"/><ellipse cx="359.9" cy="357.2" rx="2.6" ry="1.9" fill="#324a2a" opacity="1.0"/><ellipse cx="287.1" cy="344.2" rx="2.6" ry="2.0" fill="#223620" opacity="1.0"/><ellipse cx="230.6" cy="291.7" rx="2.7" ry="2.0" fill="#5a7a48" opacity="1.0"/><ellipse cx="239.2" cy="307.9" rx="1.5" ry="1.1" fill="#3b5830" opacity="1.0"/><ellipse cx="419.7" cy="360.1" rx="3.0" ry="2.2" fill="#5a7a48" opacity="1.0"/><ellipse cx="333.6" cy="349.3" rx="2.4" ry="1.8" fill="#223620" opacity="1.0"/><ellipse cx="268.3" cy="289.5" rx="2.8" ry="2.1" fill="#5a7a48" opacity="1.0"/><ellipse cx="310.0" cy="314.5" rx="1.8" ry="1.4" fill="#2a4024" opacity="1.0"/><ellipse cx="399.6" cy="333.6" rx="3.4" ry="2.5" fill="#2a4024" opacity="1.0"/><ellipse cx="237.9" cy="317.9" rx="2.0" ry="1.5" fill="#223620" opacity="1.0"/><ellipse cx="382.2" cy="357.5" rx="3.4" ry="2.5" fill="#5a7a48" opacity="1.0"/><ellipse cx="261.6" cy="300.9" rx="2.5" ry="1.9" fill="#324a2a" opacity="1.0"/><ellipse cx="260.9" cy="307.7" rx="3.3" ry="2.5" fill="#5a7a48" opacity="1.0"/><ellipse cx="258.5" cy="289.6" rx="2.6" ry="1.9" fill="#2a4024" opacity="1.0"/><ellipse cx="397.6" cy="339.2" rx="3.3" ry="2.4" fill="#5a7a48" opacity="1.0"/><ellipse cx="257.2" cy="316.2" rx="1.5" ry="1.1" fill="#223620" opacity="1.0"/><ellipse cx="293.1" cy="292.4" rx="2.5" ry="1.9" fill="#324a2a" opacity="1.0"/><ellipse cx="328.7" cy="318.8" rx="2.6" ry="1.9" fill="#3b5830" opacity="1.0"/><ellipse cx="326.6" cy="329.8" rx="2.7" ry="2.0" fill="#324a2a" opacity="1.0"/><ellipse cx="385.3" cy="314.3" rx="1.9" ry="1.4" fill="#2a4024" opacity="1.0"/><ellipse cx="337.3" cy="339.2" rx="2.7" ry="2.0" fill="#324a2a" opacity="1.0"/><ellipse cx="272.0" cy="314.1" rx="1.7" ry="1.3" fill="#3b5830" opacity="1.0"/><ellipse cx="236.7" cy="299.4" rx="3.1" ry="2.3" fill="#2a4024" opacity="1.0"/><ellipse cx="205.5" cy="309.3" rx="2.2" ry="1.6" fill="#2a4024" opacity="1.0"/><ellipse cx="379.4" cy="306.9" rx="2.6" ry="2.0" fill="#223620" opacity="1.0"/><ellipse cx="283.7" cy="321.7" rx="2.5" ry="1.9" fill="#324a2a" opacity="1.0"/><ellipse cx="338.5" cy="336.9" rx="2.0" ry="1.5" fill="#223620" opacity="1.0"/><ellipse cx="254.9" cy="304.2" rx="2.9" ry="2.1" fill="#223620" opacity="1.0"/><ellipse cx="236.6" cy="333.1" rx="2.1" ry="1.6" fill="#2a4024" opacity="1.0"/><ellipse cx="278.3" cy="312.1" rx="1.8" ry="1.4" fill="#2a4024" opacity="1.0"/><ellipse cx="427.3" cy="361.1" rx="2.4" ry="1.8" fill="#2a4024" opacity="1.0"/><ellipse cx="384.7" cy="351.3" rx="3.4" ry="2.5" fill="#3b5830" opacity="1.0"/><ellipse cx="262.9" cy="347.2" rx="1.6" ry="1.2" fill="#223620" opacity="1.0"/><ellipse cx="232.1" cy="330.1" rx="2.4" ry="1.8" fill="#3b5830" opacity="1.0"/><ellipse cx="443.2" cy="368.1" rx="2.4" ry="1.8" fill="#3b5830" opacity="1.0"/><ellipse cx="388.0" cy="337.5" rx="2.8" ry="2.1" fill="#2a4024" opacity="1.0"/><ellipse cx="443.8" cy="381.3" rx="1.9" ry="1.4" fill="#223620" opacity="1.0"/><ellipse cx="332.8" cy="341.5" rx="2.4" ry="1.7" fill="#3b5830" opacity="1.0"/><ellipse cx="209.5" cy="309.5" rx="2.2" ry="1.6" fill="#3b5830" opacity="1.0"/><ellipse cx="249.8" cy="327.2" rx="2.7" ry="2.0" fill="#3b5830" opacity="1.0"/><ellipse cx="258.0" cy="279.2" rx="1.5" ry="1.1" fill="#5a7a48" opacity="1.0"/><ellipse cx="310.1" cy="320.7" rx="2.0" ry="1.4" fill="#223620" opacity="1.0"/><ellipse cx="236.4" cy="331.9" rx="2.0" ry="1.5" fill="#3b5830" opacity="1.0"/><ellipse cx="362.3" cy="302.9" rx="1.9" ry="1.4" fill="#324a2a" opacity="1.0"/><ellipse cx="345.7" cy="318.1" rx="1.9" ry="1.4" fill="#223620" opacity="1.0"/><ellipse cx="427.5" cy="363.4" rx="1.5" ry="1.1" fill="#5a7a48" opacity="1.0"/><ellipse cx="437.0" cy="354.3" rx="3.0" ry="2.2" fill="#3b5830" opacity="1.0"/><ellipse cx="386.4" cy="353.8" rx="3.4" ry="2.5" fill="#324a2a" opacity="1.0"/><ellipse cx="331.5" cy="338.8" rx="2.1" ry="1.6" fill="#3b5830" opacity="1.0"/><ellipse cx="298.3" cy="351.5" rx="2.4" ry="1.8" fill="#324a2a" opacity="1.0"/><ellipse cx="445.9" cy="360.0" rx="3.2" ry="2.4" fill="#2a4024" opacity="1.0"/><ellipse cx="337.3" cy="352.9" rx="1.5" ry="1.1" fill="#5a7a48" opacity="1.0"/><ellipse cx="432.2" cy="376.1" rx="1.5" ry="1.1" fill="#3b5830" opacity="1.0"/><ellipse cx="370.1" cy="314.9" rx="2.8" ry="2.1" fill="#324a2a" opacity="1.0"/><ellipse cx="425.8" cy="371.1" rx="2.6" ry="1.9" fill="#223620" opacity="1.0"/><ellipse cx="243.1" cy="294.5" rx="2.7" ry="2.0" fill="#3b5830" opacity="1.0"/><ellipse cx="261.9" cy="292.5" rx="1.4" ry="1.0" fill="#5a7a48" opacity="1.0"/><ellipse cx="272.7" cy="300.7" rx="2.8" ry="2.0" fill="#223620" opacity="1.0"/><ellipse cx="345.4" cy="328.9" rx="2.2" ry="1.6" fill="#3b5830" opacity="1.0"/><ellipse cx="393.5" cy="319.8" rx="1.7" ry="1.2" fill="#5a7a48" opacity="1.0"/><ellipse cx="239.4" cy="291.4" rx="1.6" ry="1.2" fill="#3b5830" opacity="1.0"/><ellipse cx="272.4" cy="339.4" rx="1.9" ry="1.4" fill="#223620" opacity="1.0"/><ellipse cx="273.4" cy="297.8" rx="2.4" ry="1.8" fill="#3b5830" opacity="1.0"/><ellipse cx="347.8" cy="338.2" rx="1.7" ry="1.3" fill="#2a4024" opacity="1.0"/><ellipse cx="221.0" cy="292.3" rx="2.4" ry="1.8" fill="#324a2a" opacity="1.0"/><ellipse cx="208.6" cy="312.9" rx="2.5" ry="1.9" fill="#5a7a48" opacity="1.0"/><ellipse cx="215.4" cy="337.2" rx="2.7" ry="2.0" fill="#5a7a48" opacity="1.0"/><ellipse cx="267.7" cy="293.0" rx="2.0" ry="1.5" fill="#324a2a" opacity="1.0"/><ellipse cx="423.4" cy="358.4" rx="1.7" ry="1.3" fill="#2a4024" opacity="1.0"/><ellipse cx="380.9" cy="303.1" rx="1.4" ry="1.1" fill="#5a7a48" opacity="1.0"/><ellipse cx="283.1" cy="332.7" rx="1.4" ry="1.0" fill="#324a2a" opacity="1.0"/><ellipse cx="217.1" cy="314.5" rx="3.0" ry="2.2" fill="#3b5830" opacity="1.0"/><ellipse cx="417.1" cy="366.7" rx="2.9" ry="2.1" fill="#223620" opacity="1.0"/><ellipse cx="282.5" cy="334.8" rx="2.8" ry="2.0" fill="#2a4024" opacity="1.0"/><ellipse cx="440.9" cy="346.1" rx="1.4" ry="1.0" fill="#324a2a" opacity="1.0"/><ellipse cx="260.9" cy="317.4" rx="2.1" ry="1.6" fill="#3b5830" opacity="1.0"/><ellipse cx="371.0" cy="313.2" rx="2.0" ry="1.4" fill="#3b5830" opacity="1.0"/><ellipse cx="359.2" cy="302.3" rx="1.8" ry="1.3" fill="#324a2a" opacity="1.0"/><ellipse cx="346.4" cy="353.0" rx="1.7" ry="1.3" fill="#2a4024" opacity="1.0"/><ellipse cx="241.7" cy="315.5" rx="1.8" ry="1.3" fill="#2a4024" opacity="1.0"/><ellipse cx="308.1" cy="309.2" rx="2.5" ry="1.8" fill="#324a2a" opacity="1.0"/><ellipse cx="355.1" cy="309.2" rx="2.4" ry="1.7" fill="#324a2a" opacity="1.0"/><ellipse cx="437.9" cy="369.1" rx="1.5" ry="1.1" fill="#223620" opacity="1.0"/><ellipse cx="249.2" cy="313.6" rx="3.4" ry="2.5" fill="#324a2a" opacity="1.0"/><ellipse cx="395.7" cy="350.8" rx="3.3" ry="2.4" fill="#2a4024" opacity="1.0"/><ellipse cx="256.9" cy="345.2" rx="3.2" ry="2.4" fill="#223620" opacity="1.0"/><ellipse cx="335.3" cy="339.3" rx="1.6" ry="1.2" fill="#223620" opacity="1.0"/><ellipse cx="316.9" cy="327.0" rx="3.1" ry="2.3" fill="#5a7a48" opacity="1.0"/><ellipse cx="261.6" cy="343.3" rx="2.6" ry="1.9" fill="#5a7a48" opacity="1.0"/><ellipse cx="446.5" cy="334.4" rx="2.3" ry="1.7" fill="#3b5830" opacity="1.0"/><ellipse cx="359.0" cy="342.5" rx="3.3" ry="2.4" fill="#324a2a" opacity="1.0"/><polygon points="238.0,292.0 256.0,289.0 272.0,298.0 262.0,308.0 242.0,304.0" fill="#25301e" /><polygon points="163.5,313.1 214.0,284.0 204.0,334.0 186.0,326.0" fill="#8c9080" /><polygon points="184.0,298.0 198.0,291.0 203.0,298.0 190.0,304.0" fill="#c07a5a" /><ellipse cx="190.6" cy="300.4" rx="1.6" ry="1.2" fill="#6a7a62" opacity="1.0"/><ellipse cx="179.3" cy="320.8" rx="2.7" ry="2.0" fill="#4c6640" opacity="1.0"/><ellipse cx="201.5" cy="328.9" rx="1.3" ry="1.0" fill="#3c5634" opacity="1.0"/><ellipse cx="205.9" cy="316.5" rx="2.7" ry="2.0" fill="#3c5634" opacity="1.0"/><ellipse cx="203.8" cy="309.6" rx="2.7" ry="2.0" fill="#3c5634" opacity="1.0"/><ellipse cx="180.8" cy="309.9" rx="1.7" ry="1.3" fill="#3c5634" opacity="1.0"/><ellipse cx="190.6" cy="327.3" rx="1.5" ry="1.1" fill="#4c6640" opacity="1.0"/><ellipse cx="201.7" cy="327.8" rx="1.3" ry="0.9" fill="#4c6640" opacity="1.0"/><ellipse cx="203.7" cy="291.6" rx="1.7" ry="1.3" fill="#3c5634" opacity="1.0"/><ellipse cx="211.7" cy="295.0" rx="1.6" ry="1.2" fill="#4c6640" opacity="1.0"/><ellipse cx="206.4" cy="314.9" rx="2.6" ry="1.9" fill="#3c5634" opacity="1.0"/><ellipse cx="190.4" cy="299.8" rx="2.7" ry="2.0" fill="#3c5634" opacity="1.0"/><ellipse cx="198.8" cy="326.2" rx="2.7" ry="2.0" fill="#6a7a62" opacity="1.0"/><ellipse cx="194.0" cy="318.7" rx="1.4" ry="1.1" fill="#3c5634" opacity="1.0"/><polygon points="205.0,336.0 260.0,352.0 330.0,366.0 380.0,380.0 455.0,392.0 505.0,380.0 540.0,375.0 387.1,442.6 300.0,392.0 226.0,352.0" fill="#a6a48e" /><ellipse cx="291.6" cy="372.7" rx="2.2" ry="1.6" fill="#6a6a58" opacity="1.0"/><ellipse cx="436.7" cy="414.5" rx="1.7" ry="1.3" fill="#6a6a58" opacity="1.0"/><ellipse cx="330.5" cy="401.3" rx="1.6" ry="1.2" fill="#5c6c44" opacity="1.0"/><ellipse cx="454.0" cy="400.1" rx="1.9" ry="1.4" fill="#4a6038" opacity="1.0"/><ellipse cx="328.0" cy="371.5" rx="2.1" ry="1.5" fill="#6a6a58" opacity="1.0"/><ellipse cx="345.9" cy="372.4" rx="2.5" ry="1.8" fill="#4a6038" opacity="1.0"/><ellipse cx="326.8" cy="375.9" rx="2.3" ry="1.7" fill="#6a6a58" opacity="1.0"/><ellipse cx="365.7" cy="405.5" rx="1.2" ry="0.9" fill="#5c6c44" opacity="1.0"/><ellipse cx="422.7" cy="410.7" rx="2.8" ry="2.0" fill="#4a6038" opacity="1.0"/><ellipse cx="378.5" cy="398.3" rx="2.0" ry="1.4" fill="#5c6c44" opacity="1.0"/><ellipse cx="329.3" cy="375.0" rx="2.5" ry="1.8" fill="#4a6038" opacity="1.0"/><ellipse cx="393.0" cy="439.9" rx="2.4" ry="1.8" fill="#4a6038" opacity="1.0"/><ellipse cx="306.0" cy="390.1" rx="1.4" ry="1.0" fill="#5c6c44" opacity="1.0"/><ellipse cx="392.0" cy="385.0" rx="2.5" ry="1.9" fill="#4a6038" opacity="1.0"/><ellipse cx="476.2" cy="389.7" rx="1.4" ry="1.0" fill="#5c6c44" opacity="1.0"/><ellipse cx="341.2" cy="401.3" rx="2.5" ry="1.9" fill="#4a6038" opacity="1.0"/><ellipse cx="451.0" cy="412.0" rx="1.4" ry="1.0" fill="#4a6038" opacity="1.0"/><ellipse cx="340.7" cy="388.6" rx="2.6" ry="1.9" fill="#4a6038" opacity="1.0"/><ellipse cx="335.6" cy="367.9" rx="1.5" ry="1.1" fill="#4a6038" opacity="1.0"/><ellipse cx="333.9" cy="405.2" rx="1.7" ry="1.2" fill="#4a6038" opacity="1.0"/><ellipse cx="329.6" cy="369.5" rx="1.9" ry="1.4" fill="#5c6c44" opacity="1.0"/><ellipse cx="379.2" cy="392.2" rx="2.3" ry="1.7" fill="#6a6a58" opacity="1.0"/><ellipse cx="371.7" cy="391.0" rx="2.4" ry="1.7" fill="#4a6038" opacity="1.0"/><ellipse cx="402.5" cy="422.1" rx="2.7" ry="2.0" fill="#6a6a58" opacity="1.0"/><ellipse cx="314.9" cy="369.8" rx="2.5" ry="1.8" fill="#6a6a58" opacity="1.0"/><ellipse cx="414.3" cy="394.9" rx="2.6" ry="2.0" fill="#4a6038" opacity="1.0"/><ellipse cx="411.7" cy="408.8" rx="1.5" ry="1.1" fill="#4a6038" opacity="1.0"/><ellipse cx="481.0" cy="387.1" rx="1.7" ry="1.2" fill="#4a6038" opacity="1.0"/><ellipse cx="458.6" cy="408.2" rx="2.4" ry="1.8" fill="#3c5230" opacity="1.0"/><ellipse cx="228.9" cy="348.4" rx="2.5" ry="1.8" fill="#4a6038" opacity="1.0"/><polygon points="345.0,430.0 372.0,419.0 402.0,426.0 387.1,442.6" fill="#3e6a32" /><polygon points="380.0,408.0 396.0,401.0 409.0,412.0 392.0,422.0" fill="#7c8590" /><pattern id="vc3" width="3.4" height="3.4" patternUnits="userSpaceOnUse" patternTransform="rotate(-60)"><rect width="3.4" height="3.4" fill="#8a8464"/><rect width="3.4" height="1.2" fill="#5c5a40"/></pattern><polygon points="462.0,300.0 505.0,285.0 534.0,300.0 534.0,348.0 486.0,352.0 460.0,326.0" fill="url(#vc3)" /><polygon points="470.0,352.0 522.0,350.0 524.0,375.0 476.0,376.0" fill="#85765c" /><polygon points="505.0,328.0 560.0,320.0 565.0,350.0 520.0,362.0" fill="#30482a" /><polygon points="500.0,282.0 545.0,276.0 552.0,304.0 512.0,308.0" fill="#33502e" /><ellipse cx="536.6" cy="288.7" rx="2.4" ry="1.8" fill="#253a20" opacity="1.0"/><ellipse cx="521.6" cy="293.2" rx="2.6" ry="1.9" fill="#253a20" opacity="1.0"/><ellipse cx="508.1" cy="284.8" rx="2.0" ry="1.5" fill="#2e4a28" opacity="1.0"/><ellipse cx="536.6" cy="291.8" rx="2.0" ry="1.5" fill="#2e4a28" opacity="1.0"/><ellipse cx="526.6" cy="291.4" rx="2.2" ry="1.6" fill="#253a20" opacity="1.0"/><ellipse cx="540.2" cy="286.4" rx="1.4" ry="1.0" fill="#253a20" opacity="1.0"/><ellipse cx="533.9" cy="288.1" rx="2.6" ry="1.9" fill="#2e4a28" opacity="1.0"/><ellipse cx="523.5" cy="294.8" rx="2.1" ry="1.5" fill="#253a20" opacity="1.0"/><ellipse cx="517.1" cy="298.3" rx="1.7" ry="1.3" fill="#2e4a28" opacity="1.0"/><ellipse cx="518.2" cy="289.1" rx="1.4" ry="1.1" fill="#253a20" opacity="1.0"/><polygon points="440.0,262.0 470.0,256.0 492.0,276.0 470.0,300.0 452.0,322.0 436.0,300.0" fill="#6e6e4c" /><ellipse cx="481.0" cy="272.8" rx="2.1" ry="1.6" fill="#3a5430" opacity="1.0"/><ellipse cx="460.2" cy="296.8" rx="2.7" ry="2.0" fill="#4a6a3a" opacity="1.0"/><ellipse cx="463.3" cy="271.3" rx="3.0" ry="2.2" fill="#3a5430" opacity="1.0"/><ellipse cx="474.0" cy="289.0" rx="2.0" ry="1.5" fill="#4a6a3a" opacity="1.0"/><ellipse cx="467.8" cy="292.4" rx="2.3" ry="1.7" fill="#3a5430" opacity="1.0"/><ellipse cx="456.0" cy="275.9" rx="2.2" ry="1.6" fill="#3a5430" opacity="1.0"/><ellipse cx="448.2" cy="269.2" rx="2.6" ry="2.0" fill="#4a6a3a" opacity="1.0"/><ellipse cx="442.8" cy="306.5" rx="2.7" ry="2.0" fill="#4a6a3a" opacity="1.0"/><ellipse cx="474.6" cy="280.0" rx="3.4" ry="2.5" fill="#4a6a3a" opacity="1.0"/><ellipse cx="456.0" cy="267.4" rx="3.3" ry="2.4" fill="#4a6a3a" opacity="1.0"/><ellipse cx="452.0" cy="293.0" rx="2.2" ry="1.6" fill="#3a5430" opacity="1.0"/><ellipse cx="451.3" cy="274.8" rx="2.2" ry="1.6" fill="#3a5430" opacity="1.0"/><ellipse cx="470.1" cy="291.9" rx="3.0" ry="2.2" fill="#4a6a3a" opacity="1.0"/><ellipse cx="453.2" cy="284.2" rx="3.1" ry="2.3" fill="#3a5430" opacity="1.0"/><ellipse cx="462.9" cy="301.3" rx="2.3" ry="1.7" fill="#3a5430" opacity="1.0"/><ellipse cx="467.7" cy="279.0" rx="2.1" ry="1.6" fill="#3a5430" opacity="1.0"/><polygon points="560.0,250.0 650.0,226.0 690.0,256.0 640.0,280.0 600.0,318.0 560.0,320.0" fill="#707264" /><polygon points="540.0,222.0 600.0,226.0 650.0,224.0 684.0,254.0 640.0,262.0 600.0,250.0 555.0,262.0" fill="#3f6034" /><ellipse cx="647.0" cy="234.1" rx="1.4" ry="1.0" fill="#243a20" opacity="1.0"/><ellipse cx="592.9" cy="236.1" rx="1.6" ry="1.2" fill="#243a20" opacity="1.0"/><ellipse cx="635.7" cy="227.6" rx="2.0" ry="1.5" fill="#2a4424" opacity="1.0"/><ellipse cx="663.2" cy="253.4" rx="2.2" ry="1.6" fill="#2a4424" opacity="1.0"/><ellipse cx="602.9" cy="249.2" rx="1.5" ry="1.1" fill="#243a20" opacity="1.0"/><ellipse cx="591.0" cy="242.0" rx="1.7" ry="1.3" fill="#243a20" opacity="1.0"/><ellipse cx="554.7" cy="227.6" rx="1.7" ry="1.2" fill="#243a20" opacity="1.0"/><ellipse cx="610.1" cy="244.3" rx="2.9" ry="2.2" fill="#243a20" opacity="1.0"/><ellipse cx="576.9" cy="230.8" rx="1.8" ry="1.3" fill="#2a4424" opacity="1.0"/><ellipse cx="610.5" cy="245.6" rx="2.5" ry="1.8" fill="#243a20" opacity="1.0"/><ellipse cx="564.4" cy="252.8" rx="1.6" ry="1.2" fill="#2a4424" opacity="1.0"/><ellipse cx="555.7" cy="233.9" rx="1.9" ry="1.4" fill="#2a4424" opacity="1.0"/><ellipse cx="599.6" cy="228.0" rx="1.7" ry="1.2" fill="#243a20" opacity="1.0"/><ellipse cx="614.8" cy="245.2" rx="2.6" ry="1.9" fill="#2a4424" opacity="1.0"/><ellipse cx="660.0" cy="238.3" rx="1.9" ry="1.4" fill="#4e7040" opacity="1.0"/><ellipse cx="596.4" cy="257.9" rx="1.8" ry="1.3" fill="#2a4424" opacity="1.0"/><ellipse cx="624.3" cy="243.0" rx="1.9" ry="1.4" fill="#243a20" opacity="1.0"/><ellipse cx="590.7" cy="248.1" rx="2.9" ry="2.1" fill="#4e7040" opacity="1.0"/><ellipse cx="565.3" cy="228.0" rx="1.8" ry="1.3" fill="#4e7040" opacity="1.0"/><ellipse cx="571.8" cy="258.8" rx="1.7" ry="1.2" fill="#243a20" opacity="1.0"/><ellipse cx="634.2" cy="232.4" rx="2.2" ry="1.6" fill="#4e7040" opacity="1.0"/><ellipse cx="584.8" cy="224.6" rx="2.2" ry="1.6" fill="#243a20" opacity="1.0"/><ellipse cx="644.6" cy="249.0" rx="2.7" ry="2.0" fill="#243a20" opacity="1.0"/><ellipse cx="553.3" cy="249.4" rx="2.2" ry="1.6" fill="#4e7040" opacity="1.0"/><ellipse cx="571.4" cy="238.6" rx="3.0" ry="2.2" fill="#4e7040" opacity="1.0"/><ellipse cx="636.4" cy="224.8" rx="1.5" ry="1.1" fill="#4e7040" opacity="1.0"/><ellipse cx="636.5" cy="231.3" rx="3.0" ry="2.2" fill="#2a4424" opacity="1.0"/><ellipse cx="594.6" cy="233.5" rx="2.3" ry="1.7" fill="#243a20" opacity="1.0"/><ellipse cx="601.2" cy="228.3" rx="1.5" ry="1.1" fill="#2a4424" opacity="1.0"/><ellipse cx="567.7" cy="227.4" rx="2.5" ry="1.8" fill="#243a20" opacity="1.0"/><polygon points="546.0,254.0 598.0,262.0 602.0,304.0 560.0,302.0" fill="#868a84" /><path d="M552,266 L596,272 M554,276 L598,282 M556,286 L600,292" stroke="#6a6e68" stroke-width="1.2"/><polygon points="600.0,176.0 735.2,241.0 705.0,258.0 648.0,240.0 612.0,212.0" fill="#9a9482" /><polygon points="596.0,176.0 630.0,186.0 654.0,200.0 640.0,215.0 610.0,212.0" fill="#a8a290" /><polygon points="690.0,226.0 735.2,241.0 712.0,254.0 690.0,244.0" fill="#a6a69c" /><ellipse cx="567.0" cy="196.7" rx="2.1" ry="1.5" fill="#4a6038" opacity="1.0"/><ellipse cx="513.4" cy="178.6" rx="3.1" ry="2.3" fill="#2e4628" opacity="1.0"/><ellipse cx="573.8" cy="199.4" rx="2.6" ry="1.9" fill="#2e4628" opacity="1.0"/><ellipse cx="526.5" cy="174.4" rx="1.6" ry="1.2" fill="#4a6038" opacity="1.0"/><ellipse cx="541.5" cy="203.5" rx="2.2" ry="1.6" fill="#4a6038" opacity="1.0"/><ellipse cx="523.3" cy="170.2" rx="2.6" ry="1.9" fill="#2e4628" opacity="1.0"/><ellipse cx="510.4" cy="180.2" rx="2.8" ry="2.1" fill="#4a6038" opacity="1.0"/><ellipse cx="540.3" cy="173.4" rx="2.0" ry="1.5" fill="#4a6038" opacity="1.0"/><ellipse cx="512.3" cy="188.2" rx="3.0" ry="2.2" fill="#4a6038" opacity="1.0"/><ellipse cx="537.2" cy="193.7" rx="2.9" ry="2.2" fill="#3a5430" opacity="1.0"/><ellipse cx="507.7" cy="172.8" rx="2.2" ry="1.7" fill="#4a6038" opacity="1.0"/><ellipse cx="533.0" cy="168.4" rx="1.7" ry="1.2" fill="#2e4628" opacity="1.0"/><ellipse cx="533.1" cy="203.8" rx="3.1" ry="2.3" fill="#2e4628" opacity="1.0"/><ellipse cx="520.4" cy="202.8" rx="2.3" ry="1.7" fill="#4a6038" opacity="1.0"/><ellipse cx="509.4" cy="167.1" rx="2.0" ry="1.5" fill="#2e4628" opacity="1.0"/><ellipse cx="526.3" cy="167.9" rx="1.9" ry="1.4" fill="#4a6038" opacity="1.0"/><ellipse cx="544.3" cy="197.6" rx="1.8" ry="1.4" fill="#4a6038" opacity="1.0"/><ellipse cx="527.2" cy="182.4" rx="3.0" ry="2.2" fill="#4a6038" opacity="1.0"/><ellipse cx="547.9" cy="185.8" rx="2.5" ry="1.8" fill="#3a5430" opacity="1.0"/><ellipse cx="516.4" cy="189.4" rx="3.2" ry="2.4" fill="#3a5430" opacity="1.0"/><ellipse cx="526.9" cy="191.5" rx="2.1" ry="1.6" fill="#4a6038" opacity="1.0"/><ellipse cx="511.8" cy="197.6" rx="2.0" ry="1.5" fill="#4a6038" opacity="1.0"/><ellipse cx="528.0" cy="140.2" rx="2.3" ry="1.7" fill="#3a5430" opacity="1.0"/><ellipse cx="504.1" cy="135.9" rx="2.5" ry="1.9" fill="#3a5430" opacity="1.0"/><ellipse cx="515.0" cy="133.2" rx="1.2" ry="0.9" fill="#2e4628" opacity="1.0"/><ellipse cx="505.6" cy="137.5" rx="2.7" ry="2.0" fill="#3a5430" opacity="1.0"/><ellipse cx="499.0" cy="140.6" rx="2.0" ry="1.4" fill="#2e4628" opacity="1.0"/><ellipse cx="518.8" cy="141.3" rx="1.9" ry="1.4" fill="#3a5430" opacity="1.0"/><ellipse cx="521.1" cy="144.3" rx="2.3" ry="1.7" fill="#3a5430" opacity="1.0"/><ellipse cx="500.6" cy="144.2" rx="2.1" ry="1.6" fill="#3a5430" opacity="1.0"/><ellipse cx="536.0" cy="140.0" rx="1.3" ry="0.9" fill="#2e4628" opacity="1.0"/><ellipse cx="491.2" cy="141.4" rx="2.4" ry="1.8" fill="#2e4628" opacity="1.0"/><polygon points="630.0,199.0 676.0,214.0 672.0,234.0 632.0,222.0" fill="#a8a292" /><path d="M636,209 L668,220 M638,217 L670,228" stroke="#34342c" stroke-width="1.6"/><polygon points="690.0,264.0 735.2,241.0 700.0,262.0 660.0,285.0" fill="#9c9a90" /><ellipse cx="674.9" cy="218.8" rx="1.9" ry="1.4" fill="#4a6038" opacity="1.0"/><ellipse cx="676.9" cy="226.3" rx="2.6" ry="1.9" fill="#4a6038" opacity="1.0"/><ellipse cx="649.2" cy="200.6" rx="1.7" ry="1.3" fill="#3a5030" opacity="1.0"/><ellipse cx="615.3" cy="203.6" rx="1.9" ry="1.4" fill="#3a5030" opacity="1.0"/><ellipse cx="610.9" cy="189.9" rx="2.7" ry="2.0" fill="#3a5030" opacity="1.0"/><ellipse cx="653.5" cy="206.3" rx="2.3" ry="1.7" fill="#3a5030" opacity="1.0"/><ellipse cx="636.4" cy="203.8" rx="1.8" ry="1.3" fill="#4a6038" opacity="1.0"/><ellipse cx="647.4" cy="237.4" rx="1.3" ry="1.0" fill="#4a6038" opacity="1.0"/><ellipse cx="647.6" cy="202.6" rx="2.2" ry="1.6" fill="#4a6038" opacity="1.0"/><ellipse cx="658.6" cy="202.9" rx="1.2" ry="0.9" fill="#3a5030" opacity="1.0"/><ellipse cx="605.7" cy="185.6" rx="2.0" ry="1.5" fill="#4a6038" opacity="1.0"/><ellipse cx="678.7" cy="213.4" rx="2.7" ry="2.0" fill="#4a6038" opacity="1.0"/><ellipse cx="676.7" cy="217.5" rx="2.3" ry="1.7" fill="#4a6038" opacity="1.0"/><ellipse cx="646.5" cy="215.4" rx="2.5" ry="1.9" fill="#4a6038" opacity="1.0"/><ellipse cx="649.8" cy="226.2" rx="1.5" ry="1.1" fill="#3a5030" opacity="1.0"/><ellipse cx="668.1" cy="215.4" rx="1.2" ry="0.9" fill="#3a5030" opacity="1.0"/><path d="M545,228 L600,238 L640,232 L680,254" stroke="#2a4426" stroke-width="5" fill="none"/><polygon points="458.0,210.0 490.0,195.0 515.0,213.0 486.0,236.0" fill="#a0a29a" /><polygon points="470.0,212.0 488.0,203.0 503.0,213.0 485.0,225.0" fill="#b6b4a6" /><polygon points="589.0,262.0 622.0,255.0 633.0,274.0 604.0,292.0" fill="#ecece6" /><polygon points="608.0,250.0 628.0,244.0 636.0,258.0 620.0,262.0" fill="#dcb8a8" /><polygon points="560.0,312.0 588.0,304.0 598.0,318.0 568.0,334.0" fill="#e2dad2" /><polygon points="690.0,268.0 720.0,255.0 712.0,266.0 695.0,275.0" fill="#e4e4e0" /><polygon points="638.0,292.0 660.0,284.0 668.0,292.0 648.0,300.0" fill="#d8d8d0" /><path d="M225,281 L216,306 L207,333" stroke="#cecdbe" stroke-width="15" fill="none"/><path d="M220,288 L212,316" stroke="#5a5e58" stroke-width="1.2" stroke-dasharray="1.5 2.5" fill="none"/><path d="M204,337 L256,350 L300,362 L353,380 L380,392 L430,394 L460,390 L505,377 L545,370" stroke="#d0ccba" stroke-width="8" fill="none" stroke-linejoin="round"/><path d="M338,212 L380,222 L412,231 L452,238 L500,252" stroke="#aca890" stroke-width="3" fill="none"/><path d="M436,152 L500,157 L560,162 L600,170 L645,182" stroke="#bcb8a6" stroke-width="4.6" fill="none"/><path d="M598,172 L575,198 L552,220 L523,257 L493,282 L468,308 L455,330 L449,348 L468,361 L472,375 L460,390" stroke="#bab8a8" stroke-width="4" fill="none" stroke-linejoin="round"/><path d="M442,200 L450,222 L459,242" stroke="#b0ac98" stroke-width="2.5" fill="none"/><path d="M612,290 L626,300 L655,302" stroke="#d8d8d0" stroke-width="3" fill="none"/><path d="M645,182 L665,178 L700,186" stroke="#c4c0b0" stroke-width="4" fill="none"/><polygon points="289.0,360.0 300.0,354.0 318.0,361.0 306.0,368.0" fill="#b4674c" /><polygon points="324.0,370.0 336.0,364.0 344.0,372.0 332.0,378.0" fill="#b47052" /><polygon points="311.0,384.0 322.0,378.0 335.0,384.0 323.0,391.0" fill="#b0664b" /><polygon points="380.0,386.0 400.0,376.0 424.0,388.0 404.0,398.0" fill="#b46d52" /><polygon points="468.0,173.0 480.0,166.0 490.0,171.0 478.0,180.0" fill="#b46d4c" /><polygon points="485.0,148.0 498.0,141.0 509.0,146.0 496.0,154.0" fill="#a56d52" /><polygon points="514.0,149.0 530.0,142.0 542.0,147.0 526.0,156.0" fill="#ac6d52" /><polygon points="444.0,195.0 462.0,186.0 480.0,193.0 460.0,202.0" fill="#ac5f48" /><polygon points="497.0,232.0 524.0,214.0 539.0,222.0 512.0,242.0" fill="#b76a49" /><polygon points="412.0,227.0 425.0,221.0 443.0,228.0 430.0,234.0" fill="#a54844" /><polygon points="566.0,157.0 580.0,149.0 595.0,158.0 580.0,166.0" fill="#ae684c" /><polygon points="602.0,194.0 620.0,182.0 633.0,190.0 614.0,205.0" fill="#b46c50" /><polygon points="576.0,208.0 592.0,199.0 604.0,206.0 588.0,217.0" fill="#b0684b" /><polygon points="664.0,241.0 690.0,220.0 706.0,232.0 678.0,250.0" fill="#a55750" /><polygon points="371.0,238.0 384.0,232.0 396.0,239.0 382.0,245.0" fill="#b46848" /><polygon points="549.0,320.0 570.0,308.0 595.0,318.0 575.0,335.0" fill="#a55a52" /><polygon points="690.0,188.0 710.0,180.0 722.0,190.0 702.0,198.0" fill="#b06d57" /><polygon points="479.0,262.0 496.0,255.0 508.0,264.0 490.0,272.0" fill="#b0684b" /></g>
<path d="M0.00 -169.30L105.38 -230.24M0.00 -139.76L130.92 -215.47M0.00 -110.22L156.46 -200.70M0.00 -80.68L182.00 -185.93M0.00 -51.14L207.54 -171.16M0.00 -21.60L233.08 -156.39M0.00 7.94L258.62 -141.62M0.00 37.48L284.16 -126.85M0.00 67.02L309.70 -112.08M0.00 96.56L335.24 -97.31M0.00 126.10L360.78 -82.54M0.00 155.64L386.32 -67.77M0.00 185.18L411.86 -53.00M0.00 214.72L437.40 -38.23M0.00 244.26L462.94 -23.46M0.00 273.80L488.48 -8.69M0.00 303.34L514.02 6.08M0.00 332.88L539.56 20.85M0.00 362.42L565.10 35.62M0.00 391.96L590.64 50.39M0.00 421.50L616.18 65.16M0.00 451.04L641.72 79.93M0.00 480.58L667.26 94.70M0.00 510.12L692.80 109.47M0.00 539.66L718.34 124.24M0.00 569.20L743.88 139.01M0.00 598.74L769.42 153.78M0.00 628.28L794.96 168.55M0.00 657.82L820.00 183.61M0.00 687.36L820.00 213.15M0.00 716.90L820.00 242.69M0.00 -291.18L820.00 183.03M0.00 -261.64L820.00 212.57M0.00 -232.10L820.00 242.11M0.00 -202.56L794.96 257.17M0.00 -173.02L769.42 271.94M0.00 -143.48L743.88 286.71M0.00 -113.94L718.34 301.48M0.00 -84.40L692.80 316.25M0.00 -54.86L667.26 331.02M0.00 -25.32L641.72 345.79M0.00 4.22L616.18 360.56M0.00 33.76L590.64 375.33M0.00 63.30L565.10 390.10M0.00 92.84L539.56 404.87M0.00 122.38L514.02 419.64M0.00 151.92L488.48 434.41M0.00 181.46L462.94 449.18M0.00 211.00L437.40 463.95M0.00 240.54L411.86 478.72M0.00 270.08L386.32 493.49M0.00 299.62L360.78 508.26M0.00 329.16L335.24 523.03M0.00 358.70L309.70 537.80M0.00 388.24L284.16 552.57M0.00 417.78L258.62 567.34M0.00 447.32L233.08 582.11M0.00 476.86L207.54 596.88M0.00 506.40L182.00 611.65M0.00 535.94L156.46 626.42M0.00 565.48L130.92 641.19M0.00 595.02L105.38 655.96M0.00 624.56L79.84 670.73M0.00 654.10L54.30 685.50M0.00 683.64L28.76 700.27M0.00 713.18L3.22 715.04" stroke="#ffffff" stroke-opacity="0.35" stroke-width="0.8" fill="none" stroke-dasharray="1.5 1.5"/>
</g>
<polygon points="163.5,313.1 511.6,111.4 735.2,241.0 387.1,442.6" fill="none" stroke="#ff0a0a" stroke-width="1.6" stroke-linejoin="round"/>
</g></svg><div class="t" style="left:216.4px;top:70.97px;font-size:10.2px;color:#8c8c8c;letter-spacing:0.000px;transform:scaleX(0.882);transform-origin:0 0;">East</div><div class="t" style="left:250.7px;top:518.91px;font-size:9.6px;color:#8c8c8c;letter-spacing:-0.118px;">South</div><div class="b" style="left:811.8px;top:274.2px;width:8.5px;height:24.3px;background:#e3e3e3;"></div><div class="t" style="left:814.2px;top:283.62px;font-size:6.5px;color:#707070;letter-spacing:0.000px;">&gt;</div><div class="b" style="left:820px;top:64px;width:178px;height:466px;background:#f2f2f2;"></div><div class="b" style="left:820.5px;top:76.5px;width:176px;height:428px;background:#ffffff;border:1px solid #d0d0d0;"></div><div class="b" style="left:820.7px;top:65px;width:49px;height:12px;background:#ebebeb;border:1px solid #d4d4d4;border-bottom:none;"></div><div class="b" style="left:869.6px;top:63.6px;width:25px;height:14px;background:#ffffff;border:1px solid #d0d0d0;border-bottom:none;"></div><div class="t" style="left:825.0px;top:66.14px;font-size:7.8px;color:#000;letter-spacing:0.000px;transform:scaleX(0.847);transform-origin:0 0;">Scene objects</div><div class="t" style="left:874.2px;top:65.94px;font-size:7.8px;color:#000;letter-spacing:0.000px;transform:scaleX(0.824);transform-origin:0 0;">Tools</div><div class="b" style="left:823.2px;top:78.4px;width:170.5px;height:421.5px;background:#f2f2f2;border:1.5px solid #a8a8a8;border-radius:2px;"></div><div class="b" style="left:824.5px;top:79.5px;width:168px;height:13.0px;background:linear-gradient(#f4f4f4,#e2e2e2);"></div><div class="b" style="left:827px;top:92.0px;width:163px;height:1.2px;background:#a0a0a0;"></div><div class="t" style="left:839.5px;top:81.24px;font-size:7.8px;color:#000;letter-spacing:-0.000px;transform:scaleX(0.820);transform-origin:0 0;">Observer position</div><div class="b" style="left:824.5px;top:93px;width:168px;height:12.5px;background:linear-gradient(#f4f4f4,#e2e2e2);"></div><div class="t" style="left:839.5px;top:95.14px;font-size:7.8px;color:#000;letter-spacing:0.000px;transform:scaleX(0.820);transform-origin:0 0;">Ground Image</div><div class="b" style="left:824.5px;top:105px;width:168.5px;height:1.2px;background:#a0a0a0;"></div><div class="b" style="left:824.5px;top:106px;width:168.5px;height:275px;background:#ffffff;"></div><div class="t" style="left:827.6px;top:117.61px;font-size:8.0px;color:#000;letter-spacing:0.000px;transform:scaleX(0.810);transform-origin:0 0;">Ground Image</div><div class="b" style="left:826.8px;top:140.5px;width:162.7px;height:188.4px;background:transparent;border:1px solid #c8c8c8;"></div><div class="b" style="left:831.0px;top:137.5px;width:42.8px;height:6px;background:#ffffff;"></div><div class="t" style="left:831.2px;top:136.32px;font-size:7.6px;color:#000;letter-spacing:-0.109px;font-weight:bold;">Image scale</div><div class="b" style="left:829.4px;top:151.8px;width:158px;height:46.2px;background:transparent;border:1px solid #c8c8c8;"></div><div class="b" style="left:833.6px;top:148.8px;width:35.8px;height:6px;background:#ffffff;"></div><div class="t" style="left:834.0px;top:147.42px;font-size:7.6px;color:#000;letter-spacing:0.000px;transform:scaleX(0.911);transform-origin:0 0;font-weight:bold;">X1 - Origin</div><div class="b" style="left:829.4px;top:206.6px;width:158px;height:45.9px;background:transparent;border:1px solid #c8c8c8;"></div><div class="b" style="left:833.6px;top:203.6px;width:74.1px;height:6px;background:#ffffff;"></div><div class="t" style="left:834.0px;top:202.32px;font-size:7.6px;color:#000;letter-spacing:0.000px;transform:scaleX(0.933);transform-origin:0 0;font-weight:bold;">X2 - 2nd point on axis</div><div class="b" style="left:829.4px;top:261.5px;width:158px;height:45.8px;background:transparent;border:1px solid #c8c8c8;"></div><div class="b" style="left:833.6px;top:258.5px;width:50.199999999999996px;height:6px;background:#ffffff;"></div><div class="t" style="left:834.0px;top:257.22px;font-size:7.6px;color:#000;letter-spacing:0.000px;transform:scaleX(0.959);transform-origin:0 0;font-weight:bold;">Other settings</div><div class="t" style="left:841.6px;top:162.21px;font-size:8.0px;color:#000;letter-spacing:-0.000px;transform:scaleX(0.838);transform-origin:0 0;">X / West</div><div class="t" style="left:922.0px;top:160.91px;font-size:8.0px;color:#9a9a9a;letter-spacing:0.000px;transform:scaleX(0.854);transform-origin:0 0;">0.000</div><div class="t" style="left:952.3px;top:160.91px;font-size:8.0px;color:#000;letter-spacing:0.000px;">m</div><div class="t" style="left:841.6px;top:176.11px;font-size:8.0px;color:#000;letter-spacing:0.000px;transform:scaleX(0.809);transform-origin:0 0;">Y / South</div><div class="t" style="left:922.0px;top:174.81px;font-size:8.0px;color:#9a9a9a;letter-spacing:0.000px;transform:scaleX(0.854);transform-origin:0 0;">0.000</div><div class="t" style="left:952.3px;top:174.81px;font-size:8.0px;color:#000;letter-spacing:0.000px;">m</div><div class="t" style="left:841.6px;top:216.61px;font-size:8.0px;color:#000;letter-spacing:-0.000px;transform:scaleX(0.838);transform-origin:0 0;">X / West</div><div class="t" style="left:922.0px;top:215.31px;font-size:8.0px;color:#9a9a9a;letter-spacing:0.000px;transform:scaleX(0.848);transform-origin:0 0;">-100.00</div><div class="t" style="left:952.3px;top:215.31px;font-size:8.0px;color:#000;letter-spacing:0.000px;">m</div><div class="t" style="left:841.6px;top:230.51px;font-size:8.0px;color:#000;letter-spacing:0.000px;transform:scaleX(0.809);transform-origin:0 0;">Y / South</div><div class="t" style="left:922.0px;top:229.21px;font-size:8.0px;color:#9a9a9a;letter-spacing:0.000px;transform:scaleX(0.854);transform-origin:0 0;">0.000</div><div class="t" style="left:952.3px;top:229.21px;font-size:8.0px;color:#000;letter-spacing:0.000px;">m</div><div class="t" style="left:841.6px;top:271.81px;font-size:8.0px;color:#000;letter-spacing:0.000px;transform:scaleX(0.813);transform-origin:0 0;">Distance X1 -&gt; X2</div><div class="t" style="left:922.0px;top:270.51px;font-size:8.0px;color:#9a9a9a;letter-spacing:0.000px;transform:scaleX(0.826);transform-origin:0 0;">1076.93</div><div class="t" style="left:952.3px;top:270.51px;font-size:8.0px;color:#000;letter-spacing:0.000px;">m</div><div class="t" style="left:841.6px;top:285.31px;font-size:8.0px;color:#000;letter-spacing:0.000px;transform:scaleX(0.826);transform-origin:0 0;">Image base width</div><div class="t" style="left:922.0px;top:284.01px;font-size:8.0px;color:#9a9a9a;letter-spacing:0.000px;transform:scaleX(0.809);transform-origin:0 0;">100.00</div><div class="t" style="left:952.3px;top:284.01px;font-size:8.0px;color:#000;letter-spacing:0.000px;">m</div><div class="b" style="left:912.2px;top:311.4px;width:73.4px;height:13px;background:linear-gradient(#e6e6e6,#d4d4d4);border:1px solid #adadad;border-radius:2px;box-shadow:0 1px 0 #bdbdbd;"></div><div class="t" style="left:948.7px;top:313.61px;font-size:8.0px;color:#000;letter-spacing:0.000px;transform:scaleX(0.849);transform-origin:0 0;">Edit</div><div class="t" style="left:829.9px;top:336.11px;font-size:8.0px;color:#000;letter-spacing:0.000px;transform:scaleX(0.815);transform-origin:0 0;">Opacity</div><div class="b" style="left:865px;top:336.1px;width:43.6px;height:10.3px;background:#ececec;"></div><div class="b" style="left:887px;top:337.1px;width:10.4px;height:8.3px;background:#c4c4c4;"></div><div class="b" style="left:912.2px;top:335.2px;width:73.4px;height:12.2px;background:linear-gradient(#e6e6e6,#d4d4d4);border:1px solid #adadad;border-radius:2px;box-shadow:0 1px 0 #bdbdbd;"></div><div class="t" style="left:939.7px;top:337.11px;font-size:8.0px;color:#000;letter-spacing:0.000px;transform:scaleX(0.791);transform-origin:0 0;">Show/Hide</div><div class="b" style="left:826.3px;top:359px;width:163.7px;height:20.6px;background:#e4e4e4;"></div><div class="b" style="left:953.4px;top:361px;width:1px;height:17px;background:#c0c0c0;"></div><div class="t" style="left:971.7px;top:364.71px;font-size:8.0px;color:#000;letter-spacing:0.000px;transform:scaleX(0.802);transform-origin:0 0;">Crop</div><div class="b" style="left:824.5px;top:381px;width:168px;height:13.5px;background:linear-gradient(#f4f4f4,#e2e2e2);"></div><div class="b" style="left:827px;top:394.0px;width:163px;height:1.2px;background:#a0a0a0;"></div><div class="t" style="left:839.5px;top:383.04px;font-size:7.8px;color:#000;letter-spacing:0.000px;transform:scaleX(0.820);transform-origin:0 0;">Sun position</div><div class="b" style="left:824.5px;top:395px;width:168px;height:14.300000000000011px;background:linear-gradient(#f4f4f4,#e2e2e2);"></div><div class="b" style="left:827px;top:408.8px;width:163px;height:1.2px;background:#a0a0a0;"></div><div class="t" style="left:839.5px;top:397.34px;font-size:7.8px;color:#000;letter-spacing:0.000px;transform:scaleX(0.820);transform-origin:0 0;">Zone editing</div><div class="b" style="left:824.5px;top:409.8px;width:168px;height:14.0px;background:linear-gradient(#f4f4f4,#e2e2e2);"></div><div class="b" style="left:827px;top:423.3px;width:163px;height:1.2px;background:#a0a0a0;"></div><div class="t" style="left:839.5px;top:411.74px;font-size:7.8px;color:#000;letter-spacing:0.000px;transform:scaleX(0.820);transform-origin:0 0;">Shadings animation</div><div class="b" style="left:843.4px;top:505.6px;width:65.6px;height:21.6px;background:linear-gradient(#e6e6e6,#d4d4d4);border:1px solid #adadad;border-radius:2px;box-shadow:0 1px 0 #bdbdbd;"></div><div class="t" style="left:875.3px;top:511.71px;font-size:8.0px;color:#000;letter-spacing:0.000px;transform:scaleX(0.759);transform-origin:0 0;">Cancel</div><div class="b" style="left:913.2px;top:505.6px;width:81.4px;height:21.6px;background:linear-gradient(#e6e6e6,#d4d4d4);border:1px solid #adadad;border-radius:2px;box-shadow:0 1px 0 #bdbdbd;"></div><div class="t" style="left:944.7px;top:511.71px;font-size:8.0px;color:#000;letter-spacing:0.000px;transform:scaleX(0.786);transform-origin:0 0;">Close scene</div><div class="b" style="left:3px;top:530px;width:995px;height:12.5px;background:#e1e1e1;"></div><div class="b" style="left:189.5px;top:531px;width:1px;height:11px;background:#c2c2c2;"></div><div class="b" style="left:410.1px;top:531px;width:1px;height:11px;background:#c2c2c2;"></div><div class="b" style="left:601.5px;top:531px;width:1px;height:11px;background:#c2c2c2;"></div><div class="b" style="left:786.5px;top:531px;width:1px;height:11px;background:#c2c2c2;"></div><div class="t" style="left:4.6px;top:531.56px;font-size:8px;color:#000;letter-spacing:0.000px;transform:scaleX(0.912);transform-origin:0 0;">Grid cell size: 25.00 m</div><div class="t" style="left:193.0px;top:531.56px;font-size:8px;color:#000;letter-spacing:0.000px;transform:scaleX(0.915);transform-origin:0 0;">Geographical - Perspective view</div><div class="t" style="left:426.0px;top:531.56px;font-size:8px;color:#000;letter-spacing:-0.070px;">X: -634.41, Y: 337.95 m</div><div class="t" style="left:603.5px;top:531.56px;font-size:8px;color:#000;letter-spacing:-0.086px;">Active area : 0.00 m²</div><div class="t" style="left:790.0px;top:531.56px;font-size:8px;color:#000;letter-spacing:0.000px;transform:scaleX(0.964);transform-origin:0 0;">Total number of modules: 0</div><svg width="1000" height="545" style="left:0;top:0"><!-- undo -->
<path d="M12.6,36 L9.8,39.4 L12.6,42.9 L12.7,41.2 C16,41 18.6,42.6 18.3,45.6 C18.1,47.4 17.2,48.7 16.3,49.9 C19.3,48.4 21,46.6 20.9,44 C20.8,40.2 17.4,37.9 12.7,37.9 Z" fill="#000"/>
<path d="M37.7,36 L40.5,39.4 L37.7,42.9 L37.6,41.2 C34.3,41 31.7,42.6 32,45.6 C32.2,47.4 33.1,48.7 34,49.9 C31,48.4 29.3,46.6 29.4,44 C29.5,40.2 32.9,37.9 37.6,37.9 Z" fill="#7a7a7a"/>
<!-- select arrow -->
<path d="M63.9,38.3 L63.9,48 L66.1,45.9 L67.7,49.8 L69.2,49.1 L67.6,45.4 L70.4,45.4 Z" fill="#1e1e1e"/>
<!-- rect select -->
<rect x="80.6" y="36.9" width="12.4" height="8.9" fill="none" stroke="#2a2a2a" stroke-width="1" stroke-dasharray="1.4 1.1"/>
<path d="M88.3,42.4 L88.3,49.6 L89.9,48.1 L91,50.6 L92.1,50.1 L91,47.6 L93.2,47.5 Z" fill="#1e1e1e" stroke="#e1e1e1" stroke-width="0.4"/>
<path d="M98.6,42.2 L101.8,42.2 L100.2,44.2 Z" fill="#222"/>
<!-- lasso -->
<ellipse cx="113.3" cy="40.9" rx="6.5" ry="4.3" fill="none" stroke="#2a2a2a" stroke-width="1" stroke-dasharray="1.4 1.0"/>
<path d="M115.4,42.4 L115.4,49.6 L117,48.1 L118.1,50.6 L119.2,50.1 L118.1,47.6 L120.3,47.5 Z" fill="#1e1e1e" stroke="#e1e1e1" stroke-width="0.4"/>
<path d="M125.6,42.2 L128.8,42.2 L127.2,44.2 Z" fill="#222"/>
<!-- hand -->
<path d="M148.6,49.9 C146.7,47.5 145.4,45.2 146.9,44.5 C147.7,44.2 148.3,45 148.6,45.6 L148.6,38.6 C148.6,37.6 150,37.6 150,38.6 L150.1,43 L150.3,36.9 C150.3,35.9 151.8,35.9 151.8,36.9 L151.9,43 L152.2,37.4 C152.3,36.5 153.7,36.5 153.7,37.4 L153.7,43.2 L154.3,39 C154.4,38.1 155.8,38.2 155.8,39.1 L155.9,45.5 C155.9,47.6 155.2,49 154.5,49.9 Z" fill="#4b68ff"/>
<!-- orbit eye -->
<path d="M166.3,40.6 C168.5,37.8 172.2,37.2 175.6,39" stroke="#4b68ff" stroke-width="1.6" fill="none"/>
<path d="M178.6,37.2 L178.4,42.6 L173.8,40.1 Z" fill="#4b68ff"/>
<path d="M166.4,46.2 C169.5,42.4 175.2,42.4 178.3,46.2 C175.2,50 169.5,50 166.4,46.2 Z" fill="none" stroke="#5a78ff" stroke-width="0.9"/>
<circle cx="172.2" cy="46.1" r="1.6" fill="#3a58ee"/>
<!-- axes -->
<g stroke="#4b68ff" stroke-width="1.3" fill="#4b68ff">
<path d="M190.6,45.4 V38.8 M190.6,45.4 H196.5 M190.6,45.4 L186.8,48.2" fill="none"/>
<path d="M188.7,39.4 L190.6,36.6 L192.5,39.4 Z M196.2,43.5 L199,45.4 L196.2,47.3 Z M185,49.8 L185.6,46.8 L187.8,48.8 Z" stroke-width="0.4"/>
</g>
<!-- view xy, xz, zy -->
<g font-family="Liberation Sans" font-weight="bold" font-size="5.6" fill="#2a2a2a">
<text x="204.9" y="45.4">X</text><text x="211.2" y="40.5">Y</text>
<text x="224.8" y="45.4">X</text><text x="230.2" y="40.5">Z</text>
<text x="251" y="40.5">Z</text><text x="255.4" y="45.7">Y</text>
</g>
<g stroke="#4b68ff" stroke-width="1.2" fill="none">
<path d="M216.6,40 V47.5 H209.5"/><path d="M236.4,40 V47.5 H229.3"/><path d="M247.6,40 V47.5 H254.5"/>
</g>
<g fill="#4b68ff">
<path d="M214.9,40.4 L216.6,38.2 L218.3,40.4 Z M209.9,45.8 L207.8,47.5 L209.9,49.2 Z"/>
<path d="M234.7,40.4 L236.4,38.2 L238.1,40.4 Z M229.7,45.8 L227.6,47.5 L229.7,49.2 Z"/>
<path d="M245.9,40.4 L247.6,38.2 L249.3,40.4 Z M254.1,45.8 L256.2,47.5 L254.1,49.2 Z"/>
</g>
<!-- zoom in/out -->
<g>
<circle cx="282.6" cy="42" r="3.8" fill="#e1e1e1" stroke="#5577ff" stroke-width="1.4"/>
<path d="M280.8,42 H284.4 M282.6,40.2 V43.8" stroke="#2a2a2a" stroke-width="1.2"/>
<path d="M285.6,45.2 L289.6,48.8" stroke="#2a2a2a" stroke-width="1.6" stroke-linecap="round"/>
<circle cx="302.8" cy="42" r="3.8" fill="#e1e1e1" stroke="#5577ff" stroke-width="1.4"/>
<path d="M300.9,42 H304.7" stroke="#2a2a2a" stroke-width="1.3"/>
<path d="M305.8,45.2 L309.8,48.8" stroke="#2a2a2a" stroke-width="1.6" stroke-linecap="round"/>
<rect x="317.2" y="36.9" width="13.2" height="9.4" fill="none" stroke="#4a4a4a" stroke-width="0.8" stroke-dasharray="1.3 1.1"/>
<circle cx="324.8" cy="44.4" r="2.7" fill="#e1e1e1" stroke="#6688ff" stroke-width="1"/>
<path d="M326.8,46.5 L329.2,49" stroke="#2a2a2a" stroke-width="1.1"/>
<path d="M342.9,36.7 L348.4,39.4 V45.8 L342.9,48.6 L337.4,45.8 V39.4 Z M337.4,39.4 L342.9,42.2 L348.4,39.4 M342.9,42.2 V48.6" fill="none" stroke="#666" stroke-width="0.7"/>
<circle cx="346" cy="46" r="2.3" fill="#e1e1e1" stroke="#7799ff" stroke-width="1"/>
<path d="M347.7,47.7 L349.3,49.3" stroke="#2a2a2a" stroke-width="1"/>
</g>
<!-- render shaded -->
<path d="M375.1,36.3 L381,39.4 V46.7 L375.1,49.9 L369.2,46.7 V39.4 Z" fill="#fafafa" stroke="#333" stroke-width="0.7"/>
<path d="M375.1,42.6 L381,39.4 V46.7 L375.1,49.9 Z" fill="#167570"/>
<path d="M375.1,36.3 L381,39.4 L375.1,42.6 Z" fill="#48b6b6"/>
<path d="M369.2,39.4 L375.1,42.6 L375.1,49.9" fill="none" stroke="#333" stroke-width="0.6"/>
<!-- render wireframe -->
<path d="M389.3,38.2 H400 Q401.8,38.2 402,40 V47.5 Q401.8,49.2 400,49.2 H390.3 Q388.8,49.2 388.8,47.6 V38.8 Z" fill="#f4f4f4" stroke="#555" stroke-width="0.9"/>
<path d="M390,39.2 H399.5 L401,40.5 M396,40.5 V48" fill="none" stroke="#bbb" stroke-width="0.6"/>
<path d="M400.2,38.6 V49" stroke="#777" stroke-width="0.7"/>
<!-- modules -->
<rect x="420.5" y="38.5" width="12.6" height="10" rx="0.8" fill="#c8c8ff" stroke="#6a88ff" stroke-width="0.9"/>
<path d="M424.7,38.8 V48.3 M428.9,38.8 V48.3 M420.8,41.8 H432.8 M420.8,45.2 H432.8" stroke="#e6e6ff" stroke-width="0.7"/>
<rect x="440.4" y="38.5" width="12.6" height="10" rx="0.8" fill="#c6c6c6" stroke="#bcbcbc" stroke-width="0.9"/>
<path d="M444.6,38.8 V48.3 M448.8,38.8 V48.3 M440.7,41.8 H452.7 M440.7,45.2 H452.7" stroke="#dedede" stroke-width="0.7"/>
<!-- measure -->
<path d="M473.1,48.5 L484,37.7" stroke="#2a9a2a" stroke-width="0.9"/>
<circle cx="476" cy="45.7" r="0.9" fill="#2a9a2a"/><circle cx="481.1" cy="40.6" r="0.9" fill="#2a9a2a"/>
<circle cx="473.1" cy="48.5" r="0.9" fill="#ff2020"/><circle cx="484" cy="37.7" r="0.9" fill="#ff2020"/>
<path d="M500,38.3 L493.7,48.5 H503.9" fill="none" stroke="#777" stroke-width="0.6" stroke-dasharray="0.8 0.7"/>
<path d="M500,38.3 L502,40 L503.9,45.5 V48.5" fill="none" stroke="#2a9a2a" stroke-width="0.9"/>
<circle cx="500" cy="38.3" r="0.9" fill="#ff2020"/><circle cx="493.7" cy="48.5" r="0.9" fill="#ff2020"/><circle cx="503.9" cy="48.5" r="0.9" fill="#ff2020"/>
<!-- wrench -->
<path d="M527.6,38.8 C529.6,41 531.2,42.6 532.6,47.4" fill="none" stroke="#ff2222" stroke-width="1.9"/>
<circle cx="527.4" cy="38.6" r="2.5" fill="#ff2222"/>
<circle cx="532.9" cy="47.9" r="2.6" fill="#ff2222"/>
<path d="M527.4,38.4 L527.6,35 L531,36.6 Z" fill="#e1e1e1"/>
<path d="M532.9,48.1 L532.6,51.6 L529.2,50 Z" fill="#e1e1e1"/>
<!-- move -->
<path d="M550.4,38.8 V46.8 M546.4,42.8 H554.4" stroke="#ff2222" stroke-width="1.3"/>
<path d="M550.4,36.3 L552.6,39.4 H548.2 Z M550.4,50 L552.6,46.9 H548.2 Z M543.9,42.8 L547,40.6 V45 Z M557.2,42.8 L554.1,40.6 V45 Z" fill="#ff2222"/>
<!-- rotate -->
<path d="M572.9,38.4 A5.5,5.5 0 1 0 571.2,48.6" fill="none" stroke="#ff2222" stroke-width="1.7"/>
<path d="M577.4,36.9 L577.4,43.6 L571.8,40.1 Z" fill="#ff2222"/>
<!-- pencil -->
<path d="M597.8,49.4 L598.6,45.5 L604.6,36.8 L607,38.3 L601,47 Z" fill="#e8b840"/>
<path d="M604.6,36.8 L605.4,35.8 L607.8,37.3 L607,38.3 Z" fill="#e06a4a"/>
<path d="M597.8,49.4 L598.2,47.4 L599.4,48.2 Z" fill="#444"/>
<!-- tools parallelogram -->
<path d="M615.6,49.2 L622.6,37.2 H628.8 V40 L621.8,49.2 Z" fill="#e0e0f0" stroke="#ff3030" stroke-width="0.9"/>
<path d="M620.8,45.2 H626 V47.8 H619.2 Z M622,41.4 H627 V43.6 H621 Z M623.2,38.4 H628 V40.4 H622.3 Z" fill="#5a80e8"/>
<!-- north -->
<path d="M653.6,40.9 L658.3,49.4 L653.6,46.1 L648.9,49.4 Z" fill="#666"/>
<text x="651.2" y="39.6" font-family="Liberation Sans" font-size="3.2" fill="#666">N</text>
<!-- house -->
<path d="M667.9,37.8 H679.7" stroke="#333" stroke-width="0.8"/>
<circle cx="667.9" cy="37.8" r="0.8" fill="#333"/><circle cx="679.7" cy="37.8" r="0.8" fill="#333"/>
<path d="M668.5,44.2 L673.8,40.4 L679,44.2 M669.4,43.6 V48.9 H678.1 V43.6" fill="none" stroke="#333" stroke-width="0.8"/>
<rect x="675.6" y="43.6" width="1.2" height="1" fill="#866"/><rect x="671.5" y="46.6" width="1.4" height="1" fill="#866"/>
<!-- view options -->
<g font-family="Liberation Sans" font-weight="bold" font-size="6.2" fill="#333">
<text x="702.2" y="40.9">Z</text><text x="707.8" y="46.9">Y</text><text x="698.5" y="49.7">X</text>
</g>
<rect x="718.3" y="37" width="13.6" height="12.4" rx="0.8" fill="#bcbcbc" stroke="#111" stroke-width="0.9"/>
<path d="M721.7,37 V49.4 M725.1,37 V49.4 M728.5,37 V49.4 M718.3,40.1 H731.9 M718.3,43.2 H731.9 M718.3,46.3 H731.9" stroke="#111" stroke-width="0.75"/>
<path d="M743.3,36.8 V45.6" stroke="#1a1aff" stroke-width="1.4"/>
<path d="M743.3,45.6 H752" stroke="#ff2020" stroke-width="1.4"/>
<path d="M743.3,45.6 L739.3,49.3" stroke="#22cc22" stroke-width="1.6"/>
<!-- help top -->
<circle cx="982.2" cy="41.9" r="6" fill="#5d8fd0"/>
<path d="M976.2,41.9 A6,6 0 0 1 988.2,41.9 Z" fill="#6ea0e0" opacity="0.6"/>
<text x="982.3" y="45.6" text-anchor="middle" font-family="Liberation Sans" font-weight="bold" font-size="10" fill="#fff">?</text>
<!-- panel chevrons -->
<g fill="none" stroke="#222" stroke-width="1.1">
<path d="M828.7,83.2 L831,85.4 L828.7,87.6 M831.4,83.2 L833.7,85.4 L831.4,87.6"/>
<path d="M829,97.2 L831.4,99.5 L833.8,97.2 M829,100 L831.4,102.3 L833.8,100"/>
<path d="M828.7,385.9 L831,388.1 L828.7,390.3 M831.4,385.9 L833.7,388.1 L831.4,390.3"/>
<path d="M828.7,400.3 L831,402.5 L828.7,404.7 M831.4,400.3 L833.7,402.5 L831.4,404.7"/>
<path d="M828.7,414.7 L831,416.9 L828.7,419.1 M831.4,414.7 L833.7,416.9 L831.4,419.1"/>
</g>
<!-- edit pencil -->
<path d="M939.2,322.4 L939.8,319.8 L943.6,313.9 L945,314.8 L941.2,320.7 Z" fill="#e8b840"/>
<path d="M943.6,313.9 L944.2,313.1 L945.6,314 L945,314.8 Z" fill="#e86a4a"/>
<!-- eye -->
<path d="M928,341.3 C930.5,338.2 934.5,338.2 937,341.3 C934.5,344.4 930.5,344.4 928,341.3 Z" fill="none" stroke="#333" stroke-width="0.8"/>
<circle cx="932.5" cy="341.3" r="1.3" fill="#333"/>
<!-- slider arrows -->
<path d="M871.4,339.6 L869.8,341.3 L871.4,343" fill="none" stroke="#b0b0b0" stroke-width="0.7"/>
<path d="M901.8,339.6 L903.4,341.3 L901.8,343" fill="none" stroke="#b0b0b0" stroke-width="0.7"/>
<!-- help -->
<circle cx="939" cy="369" r="6" fill="#5d8fd0"/>
<path d="M933,369 A6,6 0 0 1 945,369 Z" fill="#7aaae6" opacity="0.55"/>
<text x="939.1" y="372.7" text-anchor="middle" font-family="Liberation Sans" font-weight="bold" font-size="10" fill="#fff">?</text>
<!-- crop -->
<rect x="960.4" y="364.8" width="8" height="6.6" fill="none" stroke="#555" stroke-width="0.6" stroke-dasharray="1 0.8"/>
<path d="M965.3,368.4 L965.3,373.6 L966.5,372.5 L967.3,374.3 L968.1,373.9 L967.3,372.1 L968.9,372.1 Z" fill="#1e1e1e"/>
<!-- cancel x -->
<path d="M861.2,512.2 L869.8,520.8 M869.8,512.2 L861.2,520.8" stroke="#ee0000" stroke-width="2.6"/>
<!-- check -->
<path d="M929.2,516.5 L932.8,520.6 L941.6,511.6" fill="none" stroke="#6ab04a" stroke-width="2.3"/>
<!-- status move icon -->
<path d="M417.6,531.8 L419.3,533.6 H418.2 V535.9 H420.5 V534.8 L422.3,536.5 L420.5,538.2 V537.1 H418.2 V539.4 H419.3 L417.6,541.2 L415.9,539.4 H417 V537.1 H414.7 V538.2 L412.9,536.5 L414.7,534.8 V535.9 H417 V533.6 H415.9 Z" fill="#3d6ee8"/>
<path d="M971.8,374.2 H975.6" stroke="#222" stroke-width="0.6"/>
</svg></body></html>
